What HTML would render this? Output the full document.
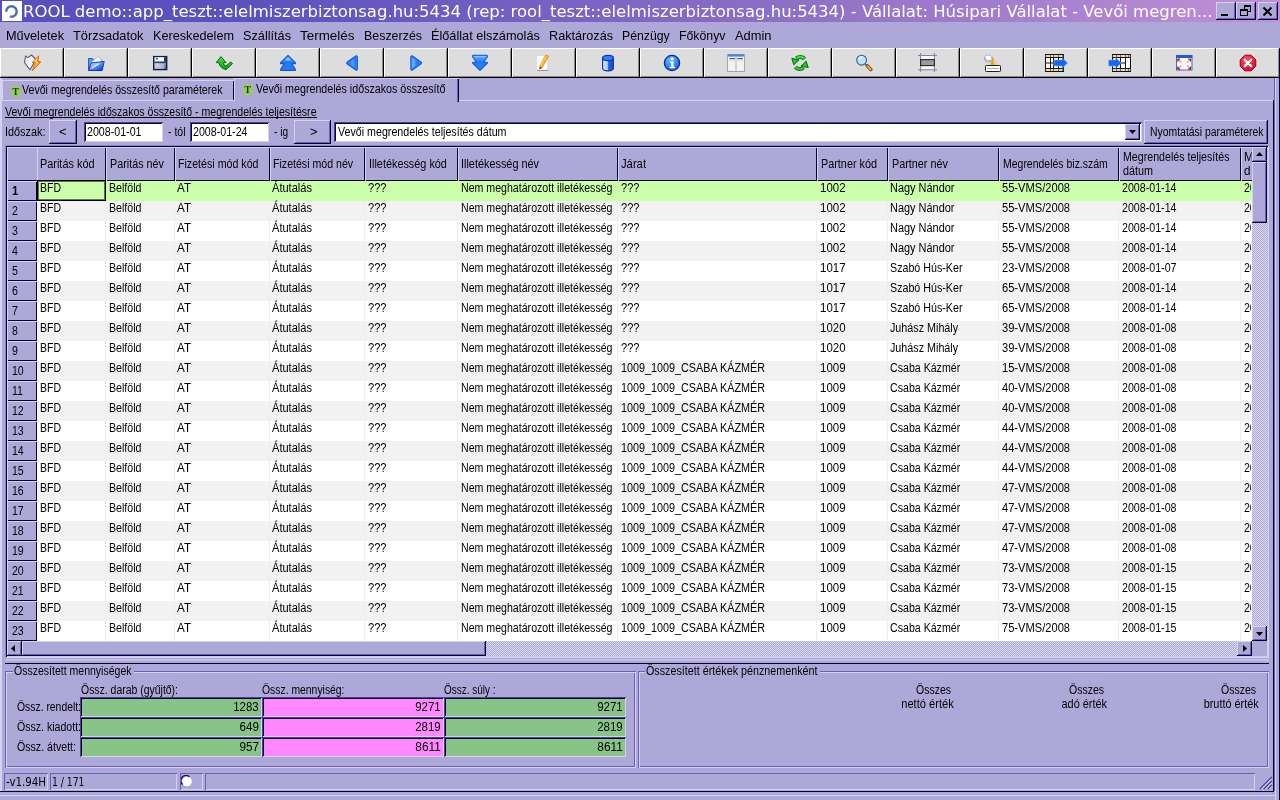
<!DOCTYPE html>
<html lang="hu"><head><meta charset="utf-8"><title>ROOL demo</title><style>
html,body{margin:0;padding:0}
body{width:1280px;height:800px;overflow:hidden;background:#AEA8D9;position:relative;font-family:"Liberation Sans",sans-serif;color:#000}
div,span,svg{position:absolute;box-sizing:border-box}
.t{white-space:nowrap;display:block}
.ov{left:0;top:0;width:1280px;height:800px;will-change:transform}
.tt{font-family:"DejaVu Sans","Liberation Sans",sans-serif}
</style></head>
<body>
<div style="left:0px;top:0px;width:1280px;height:22px;background:linear-gradient(90deg,#584EBE 0%,#5C52BE 20%,#8B6EC6 60%,#C190D6 100%);"></div>
<svg style="left:2px;top:1px" width="20" height="20" viewBox="0 0 20 20"><rect width="20" height="20" fill="#fff"/><path d="M4.3 10.7 A5.2 5.2 0 1 1 7.9 15.4" fill="none" stroke="#4E72A8" stroke-width="2.4"/></svg>
<div style="left:1216px;top:2px;width:20px;height:18px;background:#AEA8D9;box-shadow:inset -1px -1px 0 #07042E,inset 1px 1px 0 #D5D1F2,inset -2px -2px 0 #6A5FBA;"><div style="left:5px;top:12px;width:7px;height:2px;background:#000"></div></div>
<div style="left:1236px;top:2px;width:20px;height:18px;background:#AEA8D9;box-shadow:inset -1px -1px 0 #07042E,inset 1px 1px 0 #D5D1F2,inset -2px -2px 0 #6A5FBA;"><svg style="left:3px;top:2px" width="14" height="14" viewBox="0 0 14 14"><rect x="5.5" y="1.5" width="6" height="6" fill="#AEA8D9" stroke="#000"/><path d="M5 2h7" stroke="#000" stroke-width="2"/><rect x="1.5" y="5.5" width="7" height="6" fill="#AEA8D9" stroke="#000"/><path d="M1 6h8" stroke="#000" stroke-width="2"/></svg></div>
<div style="left:1258px;top:2px;width:20px;height:18px;background:#AEA8D9;box-shadow:inset -1px -1px 0 #07042E,inset 1px 1px 0 #D5D1F2,inset -2px -2px 0 #6A5FBA;"><svg style="left:4px;top:4px" width="11" height="11" viewBox="0 0 11 11"><path d="M1.5 1.5l8 8M9.5 1.5l-8 8" stroke="#000" stroke-width="2"/></svg></div>
<svg width="0" height="0" style="left:0;top:0"><defs><linearGradient id="gb" x1="0" y1="0" x2="0" y2="1"><stop offset="0" stop-color="#6CB4FF"/><stop offset=".45" stop-color="#1E7CF4"/><stop offset="1" stop-color="#2A80F0"/></linearGradient><linearGradient id="gbh" x1="0" y1="0" x2="1" y2="0"><stop offset="0" stop-color="#2478F4"/><stop offset=".6" stop-color="#4CA0FC"/><stop offset="1" stop-color="#1A68EC"/></linearGradient><linearGradient id="gbh2" x1="0" y1="0" x2="1" y2="0"><stop offset="0" stop-color="#8CCCFF"/><stop offset=".5" stop-color="#2C84F8"/><stop offset="1" stop-color="#1A6CF0"/></linearGradient><linearGradient id="gg" x1="0" y1="0" x2="0" y2="1"><stop offset="0" stop-color="#48E048"/><stop offset="1" stop-color="#0C9C14"/></linearGradient><linearGradient id="go" x1="0" y1="0" x2="1" y2="1"><stop offset="0" stop-color="#FFD040"/><stop offset="1" stop-color="#E86000"/></linearGradient><linearGradient id="gf" x1="0" y1="0" x2="1" y2="1"><stop offset="0" stop-color="#F4F6FE"/><stop offset=".5" stop-color="#B4BAD8"/><stop offset="1" stop-color="#4C548C"/></linearGradient><linearGradient id="gfo" x1="0" y1="0" x2="1" y2="1"><stop offset="0" stop-color="#F0F8FF"/><stop offset=".45" stop-color="#6CA4F4"/><stop offset=".8" stop-color="#1C54D8"/><stop offset="1" stop-color="#0C38B8"/></linearGradient><linearGradient id="gc" x1="0" y1="0" x2="1" y2="0"><stop offset="0" stop-color="#E0F2FF"/><stop offset=".45" stop-color="#9CCCFC"/><stop offset=".55" stop-color="#2468E0"/><stop offset="1" stop-color="#1448C8"/></linearGradient><radialGradient id="gi" cx=".4" cy=".3" r=".8"><stop offset="0" stop-color="#6CC0FF"/><stop offset="1" stop-color="#0C58E0"/></radialGradient><radialGradient id="gr" cx=".4" cy=".3" r=".8"><stop offset="0" stop-color="#FF5060"/><stop offset="1" stop-color="#D80018"/></radialGradient></defs></svg>
<div style="left:0px;top:48px;width:64px;height:30px;background:#DDDDDD;box-shadow:inset -1px -1px 0 #000,inset 1px 1px 0 #fff,inset -2px -2px 0 #8C8C8C;"><svg style="left:24px;top:6px;overflow:visible" width="16" height="18" viewBox="0 0 16 18"><path d="M0.5 8.5L1.5 2L3.8 3.6L7.5 1L12 5.5L6 15.8Z" fill="#F2F2FC" stroke="#585878" stroke-width="1.1" stroke-linejoin="round"/><path d="M14.8 1.8L8.2 8.4L11.2 8.9L8.2 16.9L16.8 7.9L13.6 7.3Z" fill="url(#go)" stroke="#E06800" stroke-width=".9" stroke-linejoin="round"/><path d="M13.6 3.6L9.8 7.8L12.4 8.2L10.4 13.2L14.8 8.4L12.6 8Z" fill="#FFD83C"/></svg></div>
<div style="left:64px;top:48px;width:64px;height:30px;background:#DDDDDD;box-shadow:inset -1px -1px 0 #000,inset 1px 1px 0 #fff,inset -2px -2px 0 #8C8C8C;"><svg style="left:24px;top:6px;overflow:visible" width="16" height="18" viewBox="0 0 16 18"><path d="M0.5 4.5h4l1.2 1.6h8v10.4h-13.2z" fill="#5C9CF4" stroke="#2448C8" stroke-width=".9"/><path d="M4 7.5L10 2.5L13.6 6v5H4z" fill="#F8FAFF" stroke="#90A0D0" stroke-width=".6"/><path d="M3.2 9L16.2 7.4L14.2 16.5H0.6z" fill="url(#gfo)" stroke="#1430B0" stroke-width=".9" stroke-linejoin="round"/><path d="M3.4 13.4L9.4 9.6L12.4 9.4L4.4 14.6Z" fill="#fff" opacity=".75"/></svg></div>
<div style="left:128px;top:48px;width:64px;height:30px;background:#DDDDDD;box-shadow:inset -1px -1px 0 #000,inset 1px 1px 0 #fff,inset -2px -2px 0 #8C8C8C;"><svg style="left:24px;top:6px;overflow:visible" width="16" height="18" viewBox="0 0 16 18"><rect x="1.7" y="2.6" width="13" height="13" fill="url(#gf)" stroke="#181C44" stroke-width="1.4"/><rect x="3.4" y="3.3" width="8.6" height="4" fill="#F6F8FF"/><rect x="4.2" y="3.8" width="1.5" height="1.7" fill="#303860"/><rect x="12" y="3.3" width="2.2" height="4.4" fill="#2A3064"/><rect x="2.4" y="7.6" width="11.8" height="1.5" fill="#343C6C"/><rect x="3.6" y="10.2" width="8.4" height="4.6" fill="#D4D8EC" opacity=".55"/></svg></div>
<div style="left:192px;top:48px;width:64px;height:30px;background:#DDDDDD;box-shadow:inset -1px -1px 0 #000,inset 1px 1px 0 #fff,inset -2px -2px 0 #8C8C8C;"><svg style="left:24px;top:6px;overflow:visible" width="16" height="18" viewBox="0 0 16 18"><path d="M5 2.6L0.2 8.6L3 8.6C3.4 12 6 15 10.2 15.6L16.6 9.6L14.6 8L10 12C8.2 11.4 7.6 10 7.6 8.6L10 8.6Z" fill="url(#gg)" stroke="#066C0A" stroke-width="1" stroke-linejoin="round"/></svg></div>
<div style="left:256px;top:48px;width:64px;height:30px;background:#DDDDDD;box-shadow:inset -1px -1px 0 #000,inset 1px 1px 0 #fff,inset -2px -2px 0 #8C8C8C;"><svg style="left:24px;top:6px;overflow:visible" width="16" height="18" viewBox="0 0 16 18"><path d="M8 1.4L15.4 8.6Q15.8 9.6 14.8 9.6H11.6L15.4 15.2Q15.8 16.4 14.6 16.4H1.4Q0.2 16.4 0.6 15.2L4.4 9.6H1.2Q0.2 9.6 0.6 8.6Z" fill="url(#gb)" stroke="#1458D8" stroke-width="1.1" stroke-linejoin="round"/><path d="M8 3L4.6 6.4h6.8Z" fill="#8CCCFF" opacity=".8"/></svg></div>
<div style="left:320px;top:48px;width:64px;height:30px;background:#DDDDDD;box-shadow:inset -1px -1px 0 #000,inset 1px 1px 0 #fff,inset -2px -2px 0 #8C8C8C;"><svg style="left:24px;top:6px;overflow:visible" width="16" height="18" viewBox="0 0 16 18"><path d="M3.6 9L12.4 2.8V15.2Z" fill="#1450D4" stroke="#1450D4" stroke-width="3" stroke-linejoin="round"/><path d="M3.6 9L12.4 2.8V15.2Z" fill="url(#gbh)" stroke="#2C80F6" stroke-width="1.2" stroke-linejoin="round"/></svg></div>
<div style="left:384px;top:48px;width:64px;height:30px;background:#DDDDDD;box-shadow:inset -1px -1px 0 #000,inset 1px 1px 0 #fff,inset -2px -2px 0 #8C8C8C;"><svg style="left:24px;top:6px;overflow:visible" width="16" height="18" viewBox="0 0 16 18"><path d="M12.6 9L3.8 2.8V15.2Z" fill="#1450D4" stroke="#1450D4" stroke-width="3" stroke-linejoin="round"/><path d="M12.6 9L3.8 2.8V15.2Z" fill="url(#gbh2)" stroke="#2C80F6" stroke-width="1.2" stroke-linejoin="round"/></svg></div>
<div style="left:448px;top:48px;width:64px;height:30px;background:#DDDDDD;box-shadow:inset -1px -1px 0 #000,inset 1px 1px 0 #fff,inset -2px -2px 0 #8C8C8C;"><svg style="left:24px;top:6px;overflow:visible" width="16" height="18" viewBox="0 0 16 18"><path d="M8 16.4L15.4 9.2Q15.8 8.2 14.8 8.2H11.6L15.4 2.6Q15.8 1.4 14.6 1.4H1.4Q0.2 1.4 0.6 2.6L4.4 8.2H1.2Q0.2 8.2 0.6 9.2Z" fill="url(#gb)" stroke="#1458D8" stroke-width="1.1" stroke-linejoin="round"/><path d="M2.4 2.4h11.2" stroke="#8CCCFF" stroke-width="1.2" opacity=".8"/></svg></div>
<div style="left:512px;top:48px;width:64px;height:30px;background:#DDDDDD;box-shadow:inset -1px -1px 0 #000,inset 1px 1px 0 #fff,inset -2px -2px 0 #8C8C8C;"><svg style="left:24px;top:6px;overflow:visible" width="16" height="18" viewBox="0 0 16 18"><rect x="1" y="2" width="11" height="14.3" fill="#FBFBFF"/><path d="M1 16.4h11.2" stroke="#8C8CA4" stroke-width="1"/><path d="M12 3v13" stroke="#C8C8DC" stroke-width=".8"/><path d="M9.8 0.8L12.8 2.2L6.4 13.6L3.6 15.2L3.8 12Z" fill="#F8A820" stroke="#D88000" stroke-width=".5"/><path d="M3.8 12.4L3.6 15.2L6 13.8Z" fill="#584020"/><path d="M10.2 2.4L4.6 12.4" stroke="#FFD870" stroke-width="1"/></svg></div>
<div style="left:576px;top:48px;width:64px;height:30px;background:#DDDDDD;box-shadow:inset -1px -1px 0 #000,inset 1px 1px 0 #fff,inset -2px -2px 0 #8C8C8C;"><svg style="left:24px;top:6px;overflow:visible" width="16" height="18" viewBox="0 0 16 18"><path d="M2.6 4v10c0 1.7 2.4 2.8 5.4 2.8s5.4-1.1 5.4-2.8V4z" fill="url(#gc)" stroke="#1434B0" stroke-width="1.2"/><ellipse cx="8" cy="4" rx="5.4" ry="2.6" fill="#2C84F8" stroke="#1434B0" stroke-width="1.2"/></svg></div>
<div style="left:640px;top:48px;width:64px;height:30px;background:#DDDDDD;box-shadow:inset -1px -1px 0 #000,inset 1px 1px 0 #fff,inset -2px -2px 0 #8C8C8C;"><svg style="left:24px;top:6px;overflow:visible" width="16" height="18" viewBox="0 0 16 18"><circle cx="8" cy="9" r="7.6" fill="url(#gi)" stroke="#0828A0" stroke-width="1.3"/><circle cx="8.3" cy="4.8" r="1.5" fill="#fff"/><path d="M6 7.4h3.6v5.4h1.4v1.4H5.6v-1.4h1.6v-4H6z" fill="#fff"/></svg></div>
<div style="left:704px;top:48px;width:64px;height:30px;background:#DDDDDD;box-shadow:inset -1px -1px 0 #000,inset 1px 1px 0 #fff,inset -2px -2px 0 #8C8C8C;"><svg style="left:24px;top:6px;overflow:visible" width="16" height="18" viewBox="0 0 16 18"><rect x="-0.5" y="0.5" width="17" height="17" fill="#F4F3EC" stroke="#98A2CC" stroke-width="1"/><rect x="0" y="0.2" width="16" height="2.4" fill="#4C80E4"/><path d="M8 3v14" stroke="#A8B0D0" stroke-width="1"/><path d="M1.4 4.6h5.6M9.4 4.6h5.6" stroke="#506870" stroke-width="1.2"/><path d="M0 7h16" stroke="#E8D8E8" stroke-width=".8"/></svg></div>
<div style="left:768px;top:48px;width:64px;height:30px;background:#DDDDDD;box-shadow:inset -1px -1px 0 #000,inset 1px 1px 0 #fff,inset -2px -2px 0 #8C8C8C;"><svg style="left:24px;top:6px;overflow:visible" width="16" height="18" viewBox="0 0 16 18"><g fill="none" stroke="#066C0A" stroke-width="4"><path d="M12.6 5A5.8 5.8 0 0 0 4.4 4.4"/><path d="M3.4 13A5.8 5.8 0 0 0 11.6 13.6"/></g><path d="M-0.2 4.4L7 5.8L1.8 10.8Z" fill="#066C0A" stroke="#066C0A" stroke-width="1" stroke-linejoin="round"/><path d="M16.2 13.6L9 12.2L14.2 7.2Z" fill="#066C0A" stroke="#066C0A" stroke-width="1" stroke-linejoin="round"/><g fill="none" stroke="#28C830" stroke-width="2.4"><path d="M12.6 5A5.8 5.8 0 0 0 4.4 4.4"/><path d="M3.4 13A5.8 5.8 0 0 0 11.6 13.6"/></g><path d="M0.5 4.9L6.2 6L2 10Z" fill="#22C02A"/><path d="M15.5 13.1L9.8 12L14 8Z" fill="#22C02A"/><path d="M11.8 4A5.4 5.4 0 0 0 5.4 3.4" fill="none" stroke="#78F478" stroke-width="1" opacity=".8"/></svg></div>
<div style="left:832px;top:48px;width:64px;height:30px;background:#DDDDDD;box-shadow:inset -1px -1px 0 #000,inset 1px 1px 0 #fff,inset -2px -2px 0 #8C8C8C;"><svg style="left:24px;top:6px;overflow:visible" width="16" height="18" viewBox="0 0 16 18"><path d="M9 9.8L11.4 12.2" stroke="#50586C" stroke-width="1.6"/><path d="M11.4 12L14.8 15.4" stroke="#7A4410" stroke-width="3.6" stroke-linecap="round"/><path d="M11.6 12.2L14.6 15.2" stroke="#F0A43C" stroke-width="2" stroke-linecap="round"/><circle cx="5.6" cy="6.2" r="4.9" fill="#B8E6FC" stroke="#38607C" stroke-width="1.1"/><path d="M2.6 5.4A3.2 3.2 0 0 1 6 3" stroke="#fff" stroke-width="1" fill="none"/></svg></div>
<div style="left:896px;top:48px;width:64px;height:30px;background:#DDDDDD;box-shadow:inset -1px -1px 0 #000,inset 1px 1px 0 #fff,inset -2px -2px 0 #8C8C8C;"><svg style="left:24px;top:6px;overflow:visible" width="16" height="18" viewBox="0 0 16 18"><rect x="1" y="2" width="13" height="13.5" fill="#F8F8FF"/><path d="M-2 1.5h19M-2 15.8h19M0.6 -1v19M14.4 -1v19" stroke="#8080A8" stroke-width="1"/><rect x="0.6" y="5.6" width="13.8" height="6" fill="#989C98" stroke="#282828" stroke-width="1.1"/></svg></div>
<div style="left:960px;top:48px;width:64px;height:30px;background:#DDDDDD;box-shadow:inset -1px -1px 0 #000,inset 1px 1px 0 #fff,inset -2px -2px 0 #8C8C8C;"><svg style="left:24px;top:6px;overflow:visible" width="16" height="18" viewBox="0 0 16 18"><path d="M8 2.2L6.2 11.4H14.8Z" fill="#F0A030"/><path d="M9.6 4.4L14.4 11H10.4Z" fill="#D8E4F0" opacity=".75"/><circle cx="4.2" cy="4.6" r="3.7" fill="#FDFDFD" stroke="#A0A4B4" stroke-width=".8"/><path d="M0.8 3.6C1.4 6.6 4 7.8 6.6 6.4" stroke="#70788C" stroke-width="1" fill="none"/><rect x="1.5" y="11.5" width="15" height="6" rx=".8" fill="#FDFDFD" stroke="#202020" stroke-width="1"/><path d="M3.5 14.5h11" stroke="#505050" stroke-width="1" stroke-dasharray="1 1"/></svg></div>
<div style="left:1024px;top:48px;width:64px;height:30px;background:#DDDDDD;box-shadow:inset -1px -1px 0 #000,inset 1px 1px 0 #fff,inset -2px -2px 0 #8C8C8C;"><svg style="left:24px;top:6px;overflow:visible" width="16" height="18" viewBox="0 0 16 18"><rect x="-2.5" y="0.5" width="18" height="17" fill="#FBF8EC" stroke="#101010" stroke-width="1"/><path d="M-2.5 3.5h18M-2.5 9h18M-2.5 14.5h18M2.5 0.5v17M5.5 0.5v17M10.5 0.5v17M14.5 0.5v17" stroke="#181810" stroke-width="1"/><path d="M-2.5 2h18M-2.5 16h18" stroke="#C8B890" stroke-width="1.6" opacity=".7"/><path d="M6 6h8V3.6L19.6 9L14 14.4V12H6Z" fill="#1466F4" stroke="#88B8FF" stroke-width=".6"/></svg></div>
<div style="left:1088px;top:48px;width:64px;height:30px;background:#DDDDDD;box-shadow:inset -1px -1px 0 #000,inset 1px 1px 0 #fff,inset -2px -2px 0 #8C8C8C;"><svg style="left:24px;top:6px;overflow:visible" width="16" height="18" viewBox="0 0 16 18"><rect x="0.5" y="0.5" width="18" height="17" fill="#FBF8EC" stroke="#101010" stroke-width="1"/><path d="M0.5 3.5h18M0.5 9h18M0.5 14.5h18M4.5 0.5v17M8.5 0.5v17M13.5 0.5v17M16.5 0.5v17" stroke="#181810" stroke-width="1"/><path d="M0.5 2h18M0.5 16h18" stroke="#C8B890" stroke-width="1.6" opacity=".7"/><rect x="14" y="4" width="4" height="10" fill="#fff"/><path d="M-3.4 6h7V3.6L9.4 9L3.6 14.4V12h-7Z" fill="#1466F4" stroke="#88B8FF" stroke-width=".6"/></svg></div>
<div style="left:1152px;top:48px;width:64px;height:30px;background:#DDDDDD;box-shadow:inset -1px -1px 0 #000,inset 1px 1px 0 #fff,inset -2px -2px 0 #8C8C8C;"><svg style="left:24px;top:6px;overflow:visible" width="16" height="18" viewBox="0 0 16 18"><rect x="0.5" y="1.5" width="15.5" height="14.5" fill="#FFF8F8" stroke="#4468C8" stroke-width="1"/><rect x="0.2" y="1" width="16" height="3" fill="#2458DC"/><path d="M2.4 6L5.4 8.6M14 6L11 8.6M2.4 14.2L5.4 11.6M14 14.2L11 11.6" stroke="#F09090" stroke-width="1.3"/><path d="M1.6 5.2h2.6M1.8 5v2.6M14.8 5.2h-2.6M14.6 5v2.6M1.6 15h2.6M1.8 15.2v-2.6M14.8 15h-2.6M14.6 15.2v-2.6" stroke="#A02028" stroke-width="1.3"/></svg></div>
<div style="left:1216px;top:48px;width:64px;height:30px;background:#DDDDDD;box-shadow:inset -1px -1px 0 #000,inset 1px 1px 0 #fff,inset -2px -2px 0 #8C8C8C;"><svg style="left:24px;top:6px;overflow:visible" width="16" height="18" viewBox="0 0 16 18"><path d="M4.8 1.2h6.4L15.8 5.8v6.4L11.2 16.8H4.8L0.2 12.2V5.8Z" fill="url(#gr)" stroke="#A80010" stroke-width="1"/><path d="M4.8 5.8l6.4 6.4M11.2 5.8l-6.4 6.4" stroke="#fff" stroke-width="2.4" stroke-linecap="round"/></svg></div>
<div style="left:0px;top:78px;width:2px;height:713px;background:#D5D1F2;"></div>
<div style="left:1274px;top:78px;width:1px;height:713px;background:#6A5FBA;"></div>
<div style="left:1275px;top:78px;width:1px;height:722px;background:#D5D1F2;"></div>
<div style="left:1279px;top:48px;width:1px;height:752px;background:#07042E;"></div>
<div style="left:1273px;top:100px;width:1px;height:692px;background:#07042E;"></div>
<div style="left:0px;top:791px;width:1274px;height:1px;background:#07042E;"></div>
<div style="left:0px;top:795px;width:1276px;height:1px;background:#D5D1F2;"></div>
<div style="left:2px;top:100px;width:1271px;height:1px;background:#D5D1F2;"></div>
<div style="left:2px;top:80px;width:232px;height:20px;background:#AEA8D9;box-shadow:inset 1px 1px 0 #D5D1F2;"></div>
<div style="left:233px;top:81px;width:1px;height:19px;background:#07042E;"></div>
<div style="left:234px;top:78px;width:225px;height:24px;background:#AEA8D9;box-shadow:inset 1px 1px 0 #D5D1F2,inset -1px 0 0 #07042E,inset -2px 0 0 #6A5FBA;"></div>
<div style="left:11px;top:86px;width:10px;height:11px;background:#9ACA62;border-radius:2px"></div>
<div style="left:243px;top:84px;width:10px;height:11px;background:#9ACA62;border-radius:2px"></div>
<div style="left:5px;top:117px;width:312px;height:1px;background:#000;"></div>
<div style="left:49px;top:120px;width:28px;height:24px;background:#AEA8D9;box-shadow:inset -1px -1px 0 #07042E,inset 1px 1px 0 #D5D1F2,inset -2px -2px 0 #6A5FBA;"></div>
<div style="left:84px;top:122px;width:79px;height:20px;background:#fff;box-shadow:inset 1px 1px 0 #4A4098,inset -1px -1px 0 #D5D1F2,inset 2px 2px 0 #07042E;"></div>
<div style="left:190px;top:122px;width:79px;height:20px;background:#fff;box-shadow:inset 1px 1px 0 #4A4098,inset -1px -1px 0 #D5D1F2,inset 2px 2px 0 #07042E;"></div>
<div style="left:294px;top:120px;width:37px;height:24px;background:#AEA8D9;box-shadow:inset -1px -1px 0 #07042E,inset 1px 1px 0 #D5D1F2,inset -2px -2px 0 #6A5FBA;"></div>
<div style="left:334px;top:122px;width:808px;height:20px;background:#fff;box-shadow:inset 1px 1px 0 #4A4098,inset -1px -1px 0 #D5D1F2,inset 2px 2px 0 #07042E;"></div>
<div style="left:1125px;top:124px;width:15px;height:16px;background:#AEA8D9;box-shadow:inset -1px -1px 0 #07042E,inset 1px 1px 0 #D5D1F2,inset -2px -2px 0 #6A5FBA;"><svg style="left:4px;top:6px" width="7" height="4" viewBox="0 0 7 4"><path d="M0 0h7L3.5 4z" fill="#000"/></svg></div>
<div style="left:1144px;top:120px;width:124px;height:24px;background:#AEA8D9;box-shadow:inset -1px -1px 0 #07042E,inset 1px 1px 0 #D5D1F2,inset -2px -2px 0 #6A5FBA;"></div>
<div style="left:5px;top:145px;width:1264px;height:513px;background:#fff;box-shadow:inset 1px 1px 0 #8A82CC,inset -1px -1px 0 #D5D1F2,inset 2px 2px 0 #07042E,inset -2px -2px 0 #D0CCEA;"></div>
<div style="left:7px;top:147px;width:1245px;height:34px;background:#AEA8D9;"></div>
<div style="left:7px;top:147px;width:30px;height:34px;background:#AEA8D9;box-shadow:inset 1px 1px 0 #D5D1F2,inset 0 -1px 0 #07042E;"></div>
<div style="left:37px;top:147px;width:69px;height:34px;background:#AEA8D9;box-shadow:inset 1px 1px 0 #D5D1F2,inset -1px -1px 0 #07042E;"></div>
<div style="left:106px;top:147px;width:69px;height:34px;background:#AEA8D9;box-shadow:inset 1px 1px 0 #D5D1F2,inset -1px -1px 0 #07042E;"></div>
<div style="left:175px;top:147px;width:95px;height:34px;background:#AEA8D9;box-shadow:inset 1px 1px 0 #D5D1F2,inset -1px -1px 0 #07042E;"></div>
<div style="left:270px;top:147px;width:95px;height:34px;background:#AEA8D9;box-shadow:inset 1px 1px 0 #D5D1F2,inset -1px -1px 0 #07042E;"></div>
<div style="left:365px;top:147px;width:93px;height:34px;background:#AEA8D9;box-shadow:inset 1px 1px 0 #D5D1F2,inset -1px -1px 0 #07042E;"></div>
<div style="left:458px;top:147px;width:160px;height:34px;background:#AEA8D9;box-shadow:inset 1px 1px 0 #D5D1F2,inset -1px -1px 0 #07042E;"></div>
<div style="left:618px;top:147px;width:199px;height:34px;background:#AEA8D9;box-shadow:inset 1px 1px 0 #D5D1F2,inset -1px -1px 0 #07042E;"></div>
<div style="left:817px;top:147px;width:71px;height:34px;background:#AEA8D9;box-shadow:inset 1px 1px 0 #D5D1F2,inset -1px -1px 0 #07042E;"></div>
<div style="left:888px;top:147px;width:111px;height:34px;background:#AEA8D9;box-shadow:inset 1px 1px 0 #D5D1F2,inset -1px -1px 0 #07042E;"></div>
<div style="left:999px;top:147px;width:120px;height:34px;background:#AEA8D9;box-shadow:inset 1px 1px 0 #D5D1F2,inset -1px -1px 0 #07042E;"></div>
<div style="left:1119px;top:147px;width:122px;height:34px;background:#AEA8D9;box-shadow:inset 1px 1px 0 #D5D1F2,inset -1px -1px 0 #07042E;"></div>
<div style="left:1241px;top:147px;width:19px;height:34px;background:#AEA8D9;box-shadow:inset 1px 1px 0 #D5D1F2,inset -1px -1px 0 #07042E;"></div>
<div style="left:37px;top:181px;width:1215px;height:20px;background:#CCFFAA;"></div>
<div style="left:7px;top:181px;width:30px;height:20px;background:#AEA8D9;box-shadow:inset 1px 1px 0 #D5D1F2,inset -1px -1px 0 #07042E;"></div>
<div style="left:37px;top:201px;width:1215px;height:20px;background:#F2F2F2;"></div>
<div style="left:7px;top:201px;width:30px;height:20px;background:#AEA8D9;box-shadow:inset 1px 1px 0 #D5D1F2,inset -1px -1px 0 #07042E;"></div>
<div style="left:37px;top:221px;width:1215px;height:20px;background:#FFFFFF;"></div>
<div style="left:7px;top:221px;width:30px;height:20px;background:#AEA8D9;box-shadow:inset 1px 1px 0 #D5D1F2,inset -1px -1px 0 #07042E;"></div>
<div style="left:37px;top:241px;width:1215px;height:20px;background:#F2F2F2;"></div>
<div style="left:7px;top:241px;width:30px;height:20px;background:#AEA8D9;box-shadow:inset 1px 1px 0 #D5D1F2,inset -1px -1px 0 #07042E;"></div>
<div style="left:37px;top:261px;width:1215px;height:20px;background:#FFFFFF;"></div>
<div style="left:7px;top:261px;width:30px;height:20px;background:#AEA8D9;box-shadow:inset 1px 1px 0 #D5D1F2,inset -1px -1px 0 #07042E;"></div>
<div style="left:37px;top:281px;width:1215px;height:20px;background:#F2F2F2;"></div>
<div style="left:7px;top:281px;width:30px;height:20px;background:#AEA8D9;box-shadow:inset 1px 1px 0 #D5D1F2,inset -1px -1px 0 #07042E;"></div>
<div style="left:37px;top:301px;width:1215px;height:20px;background:#FFFFFF;"></div>
<div style="left:7px;top:301px;width:30px;height:20px;background:#AEA8D9;box-shadow:inset 1px 1px 0 #D5D1F2,inset -1px -1px 0 #07042E;"></div>
<div style="left:37px;top:321px;width:1215px;height:20px;background:#F2F2F2;"></div>
<div style="left:7px;top:321px;width:30px;height:20px;background:#AEA8D9;box-shadow:inset 1px 1px 0 #D5D1F2,inset -1px -1px 0 #07042E;"></div>
<div style="left:37px;top:341px;width:1215px;height:20px;background:#FFFFFF;"></div>
<div style="left:7px;top:341px;width:30px;height:20px;background:#AEA8D9;box-shadow:inset 1px 1px 0 #D5D1F2,inset -1px -1px 0 #07042E;"></div>
<div style="left:37px;top:361px;width:1215px;height:20px;background:#F2F2F2;"></div>
<div style="left:7px;top:361px;width:30px;height:20px;background:#AEA8D9;box-shadow:inset 1px 1px 0 #D5D1F2,inset -1px -1px 0 #07042E;"></div>
<div style="left:37px;top:381px;width:1215px;height:20px;background:#FFFFFF;"></div>
<div style="left:7px;top:381px;width:30px;height:20px;background:#AEA8D9;box-shadow:inset 1px 1px 0 #D5D1F2,inset -1px -1px 0 #07042E;"></div>
<div style="left:37px;top:401px;width:1215px;height:20px;background:#F2F2F2;"></div>
<div style="left:7px;top:401px;width:30px;height:20px;background:#AEA8D9;box-shadow:inset 1px 1px 0 #D5D1F2,inset -1px -1px 0 #07042E;"></div>
<div style="left:37px;top:421px;width:1215px;height:20px;background:#FFFFFF;"></div>
<div style="left:7px;top:421px;width:30px;height:20px;background:#AEA8D9;box-shadow:inset 1px 1px 0 #D5D1F2,inset -1px -1px 0 #07042E;"></div>
<div style="left:37px;top:441px;width:1215px;height:20px;background:#F2F2F2;"></div>
<div style="left:7px;top:441px;width:30px;height:20px;background:#AEA8D9;box-shadow:inset 1px 1px 0 #D5D1F2,inset -1px -1px 0 #07042E;"></div>
<div style="left:37px;top:461px;width:1215px;height:20px;background:#FFFFFF;"></div>
<div style="left:7px;top:461px;width:30px;height:20px;background:#AEA8D9;box-shadow:inset 1px 1px 0 #D5D1F2,inset -1px -1px 0 #07042E;"></div>
<div style="left:37px;top:481px;width:1215px;height:20px;background:#F2F2F2;"></div>
<div style="left:7px;top:481px;width:30px;height:20px;background:#AEA8D9;box-shadow:inset 1px 1px 0 #D5D1F2,inset -1px -1px 0 #07042E;"></div>
<div style="left:37px;top:501px;width:1215px;height:20px;background:#FFFFFF;"></div>
<div style="left:7px;top:501px;width:30px;height:20px;background:#AEA8D9;box-shadow:inset 1px 1px 0 #D5D1F2,inset -1px -1px 0 #07042E;"></div>
<div style="left:37px;top:521px;width:1215px;height:20px;background:#F2F2F2;"></div>
<div style="left:7px;top:521px;width:30px;height:20px;background:#AEA8D9;box-shadow:inset 1px 1px 0 #D5D1F2,inset -1px -1px 0 #07042E;"></div>
<div style="left:37px;top:541px;width:1215px;height:20px;background:#FFFFFF;"></div>
<div style="left:7px;top:541px;width:30px;height:20px;background:#AEA8D9;box-shadow:inset 1px 1px 0 #D5D1F2,inset -1px -1px 0 #07042E;"></div>
<div style="left:37px;top:561px;width:1215px;height:20px;background:#F2F2F2;"></div>
<div style="left:7px;top:561px;width:30px;height:20px;background:#AEA8D9;box-shadow:inset 1px 1px 0 #D5D1F2,inset -1px -1px 0 #07042E;"></div>
<div style="left:37px;top:581px;width:1215px;height:20px;background:#FFFFFF;"></div>
<div style="left:7px;top:581px;width:30px;height:20px;background:#AEA8D9;box-shadow:inset 1px 1px 0 #D5D1F2,inset -1px -1px 0 #07042E;"></div>
<div style="left:37px;top:601px;width:1215px;height:20px;background:#F2F2F2;"></div>
<div style="left:7px;top:601px;width:30px;height:20px;background:#AEA8D9;box-shadow:inset 1px 1px 0 #D5D1F2,inset -1px -1px 0 #07042E;"></div>
<div style="left:37px;top:621px;width:1215px;height:20px;background:#FFFFFF;"></div>
<div style="left:7px;top:621px;width:30px;height:20px;background:#AEA8D9;box-shadow:inset 1px 1px 0 #D5D1F2,inset -1px -1px 0 #07042E;"></div>
<div style="left:105px;top:201px;width:1px;height:440px;background:#EEEEEE;"></div>
<div style="left:174px;top:201px;width:1px;height:440px;background:#EEEEEE;"></div>
<div style="left:269px;top:201px;width:1px;height:440px;background:#EEEEEE;"></div>
<div style="left:364px;top:201px;width:1px;height:440px;background:#EEEEEE;"></div>
<div style="left:457px;top:201px;width:1px;height:440px;background:#EEEEEE;"></div>
<div style="left:617px;top:201px;width:1px;height:440px;background:#EEEEEE;"></div>
<div style="left:816px;top:201px;width:1px;height:440px;background:#EEEEEE;"></div>
<div style="left:887px;top:201px;width:1px;height:440px;background:#EEEEEE;"></div>
<div style="left:998px;top:201px;width:1px;height:440px;background:#EEEEEE;"></div>
<div style="left:1118px;top:201px;width:1px;height:440px;background:#EEEEEE;"></div>
<div style="left:1240px;top:201px;width:1px;height:440px;background:#EEEEEE;"></div>
<div style="left:37px;top:180px;width:69px;height:21px;border:1px solid #000;box-shadow:inset 0 0 0 1px rgba(0,0,0,.55);box-sizing:border-box;"></div>
<div style="left:1252px;top:147px;width:16px;height:494px;background-color:#C5C1E6;background-image:conic-gradient(#AEA8D9 25%,#DCD9F3 0 50%,#AEA8D9 0 75%,#DCD9F3 0);background-size:2px 2px;"></div>
<div style="left:7px;top:641px;width:1245px;height:15px;background-color:#C5C1E6;background-image:conic-gradient(#AEA8D9 25%,#DCD9F3 0 50%,#AEA8D9 0 75%,#DCD9F3 0);background-size:2px 2px;"></div>
<div style="left:1252px;top:641px;width:15px;height:15px;background:#AEA8D9;"></div>
<div style="left:1252px;top:147px;width:15px;height:15px;background:#AEA8D9;box-shadow:inset -1px -1px 0 #07042E,inset 1px 1px 0 #D5D1F2,inset -2px -2px 0 #6A5FBA;"><svg style="left:4px;top:5px" width="7" height="4" viewBox="0 0 7 4"><path d="M0 4h7L3.5 0z" fill="#000"/></svg></div>
<div style="left:1252px;top:162px;width:15px;height:61px;background:#AEA8D9;box-shadow:inset -1px -1px 0 #07042E,inset 1px 1px 0 #D5D1F2,inset -2px -2px 0 #6A5FBA;"></div>
<div style="left:1252px;top:626px;width:15px;height:15px;background:#AEA8D9;box-shadow:inset -1px -1px 0 #07042E,inset 1px 1px 0 #D5D1F2,inset -2px -2px 0 #6A5FBA;"><svg style="left:4px;top:6px" width="7" height="4" viewBox="0 0 7 4"><path d="M0 0h7L3.5 4z" fill="#000"/></svg></div>
<div style="left:7px;top:641px;width:15px;height:15px;background:#AEA8D9;box-shadow:inset -1px -1px 0 #07042E,inset 1px 1px 0 #D5D1F2,inset -2px -2px 0 #6A5FBA;"><svg style="left:4px;top:4px" width="4" height="7" viewBox="0 0 4 7"><path d="M4 0v7L0 3.5z" fill="#000"/></svg></div>
<div style="left:22px;top:641px;width:464px;height:15px;background:#AEA8D9;box-shadow:inset -1px -1px 0 #07042E,inset 1px 1px 0 #D5D1F2,inset -2px -2px 0 #6A5FBA;"></div>
<div style="left:1237px;top:641px;width:15px;height:15px;background:#AEA8D9;box-shadow:inset -1px -1px 0 #07042E,inset 1px 1px 0 #D5D1F2,inset -2px -2px 0 #6A5FBA;"><svg style="left:6px;top:4px" width="4" height="7" viewBox="0 0 4 7"><path d="M0 0v7L4 3.5z" fill="#000"/></svg></div>
<div style="left:5px;top:659px;width:1264px;height:2px;background:#C4C0E5;"></div>
<div style="left:5px;top:663px;width:1264px;height:1px;background:#07042E;"></div>
<div style="left:5px;top:671px;width:631px;height:97px;box-shadow:inset 1px 1px 0 #6A5FBA,inset -1px -1px 0 #D5D1F2,inset 2px 2px 0 #D5D1F2,inset -2px -2px 0 #6A5FBA;"></div>
<div style="left:12.5px;top:667px;width:121px;height:10px;background:#AEA8D9;"></div>
<div style="left:638px;top:671px;width:631px;height:97px;box-shadow:inset 1px 1px 0 #6A5FBA,inset -1px -1px 0 #D5D1F2,inset 2px 2px 0 #D5D1F2,inset -2px -2px 0 #6A5FBA;"></div>
<div style="left:645px;top:667px;width:175px;height:10px;background:#AEA8D9;"></div>
<div style="left:80px;top:697px;width:182px;height:20px;background:#88C488;box-shadow:inset 1px 1px 0 #4A4098,inset -1px -1px 0 #D5D1F2,inset 2px 2px 0 #07042E;"></div>
<div style="left:262px;top:697px;width:182px;height:20px;background:#FF88FF;box-shadow:inset 1px 1px 0 #4A4098,inset -1px -1px 0 #D5D1F2,inset 2px 2px 0 #07042E;"></div>
<div style="left:444px;top:697px;width:182px;height:20px;background:#88C488;box-shadow:inset 1px 1px 0 #4A4098,inset -1px -1px 0 #D5D1F2,inset 2px 2px 0 #07042E;"></div>
<div style="left:80px;top:717px;width:182px;height:20px;background:#88C488;box-shadow:inset 1px 1px 0 #4A4098,inset -1px -1px 0 #D5D1F2,inset 2px 2px 0 #07042E;"></div>
<div style="left:262px;top:717px;width:182px;height:20px;background:#FF88FF;box-shadow:inset 1px 1px 0 #4A4098,inset -1px -1px 0 #D5D1F2,inset 2px 2px 0 #07042E;"></div>
<div style="left:444px;top:717px;width:182px;height:20px;background:#88C488;box-shadow:inset 1px 1px 0 #4A4098,inset -1px -1px 0 #D5D1F2,inset 2px 2px 0 #07042E;"></div>
<div style="left:80px;top:737px;width:182px;height:20px;background:#88C488;box-shadow:inset 1px 1px 0 #4A4098,inset -1px -1px 0 #D5D1F2,inset 2px 2px 0 #07042E;"></div>
<div style="left:262px;top:737px;width:182px;height:20px;background:#FF88FF;box-shadow:inset 1px 1px 0 #4A4098,inset -1px -1px 0 #D5D1F2,inset 2px 2px 0 #07042E;"></div>
<div style="left:444px;top:737px;width:182px;height:20px;background:#88C488;box-shadow:inset 1px 1px 0 #4A4098,inset -1px -1px 0 #D5D1F2,inset 2px 2px 0 #07042E;"></div>
<div style="left:4px;top:773px;width:44px;height:17px;box-shadow:inset 1px 1px 0 #6A5FBA,inset -1px -1px 0 #D5D1F2;"></div>
<div style="left:50px;top:773px;width:127px;height:17px;box-shadow:inset 1px 1px 0 #6A5FBA,inset -1px -1px 0 #D5D1F2;"></div>
<div style="left:180px;top:773px;width:23px;height:17px;box-shadow:inset 1px 1px 0 #6A5FBA,inset -1px -1px 0 #D5D1F2;"></div>
<div style="left:205px;top:773px;width:1050px;height:17px;box-shadow:inset 1px 1px 0 #6A5FBA,inset -1px -1px 0 #D5D1F2;"></div>
<svg style="left:181px;top:775px" width="12" height="13" viewBox="0 0 12 13"><circle cx="6" cy="6.5" r="4.8" fill="#fff"/><path d="M1.6 9.6 A5.2 5.2 0 0 1 8.4 1.7" fill="none" stroke="#1A1440" stroke-width="1.3"/></svg>
<svg style="left:1259px;top:776px" width="14" height="14" viewBox="0 0 14 14"><path d="M13 1L1 13M13 5L5 13M13 9L9 13" stroke="#463C9C" stroke-width="1.5"/><path d="M13 2.3L2.3 13M13 6.3L6.3 13M13 10.3L10.3 13" stroke="#D8D5EC" stroke-width="1"/></svg>
<div class="ov">
<span class="t tt" style="font-size:16px;transform:scaleX(1.0302);line-height:18px;top:2.71px;left:23.00px;transform-origin:0 0;color:#fff;">ROOL demo::app_teszt::elelmiszerbiztonsag.hu:5434 (rep: rool_teszt::elelmiszerbiztonsag.hu:5434) - Vállalat: Húsipari Vállalat - Vevői megren...</span>
<span class="t" style="font-size:13px;transform:scaleX(0.9789);line-height:15px;top:28.20px;left:5.50px;transform-origin:0 0;">Műveletek</span>
<span class="t" style="font-size:13px;transform:scaleX(0.9856);line-height:15px;top:28.20px;left:73.00px;transform-origin:0 0;">Törzsadatok</span>
<span class="t" style="font-size:13px;transform:scaleX(0.9748);line-height:15px;top:28.20px;left:152.50px;transform-origin:0 0;">Kereskedelem</span>
<span class="t" style="font-size:13px;transform:scaleX(0.9770);line-height:15px;top:28.20px;left:242.50px;transform-origin:0 0;">Szállítás</span>
<span class="t" style="font-size:13px;transform:scaleX(1.0335);line-height:15px;top:28.20px;left:300.00px;transform-origin:0 0;">Termelés</span>
<span class="t" style="font-size:13px;transform:scaleX(0.9557);line-height:15px;top:28.20px;left:363.50px;transform-origin:0 0;">Beszerzés</span>
<span class="t" style="font-size:13px;transform:scaleX(0.9778);line-height:15px;top:28.20px;left:430.70px;transform-origin:0 0;">Élőállat elszámolás</span>
<span class="t" style="font-size:13px;transform:scaleX(0.9734);line-height:15px;top:28.20px;left:548.50px;transform-origin:0 0;">Raktározás</span>
<span class="t" style="font-size:13px;transform:scaleX(0.9429);line-height:15px;top:28.20px;left:621.50px;transform-origin:0 0;">Pénzügy</span>
<span class="t" style="font-size:13px;transform:scaleX(0.9465);line-height:15px;top:28.20px;left:679.00px;transform-origin:0 0;">Főkönyv</span>
<span class="t" style="font-size:13px;transform:scaleX(0.9906);line-height:15px;top:28.20px;left:735.00px;transform-origin:0 0;">Admin</span>
<span class="t" style="left:12.6px;top:85.5px;font-family:'Liberation Serif',serif;font-weight:bold;font-size:9.5px;line-height:12px;color:#0A400A">T</span>
<span class="t" style="left:244.6px;top:83.5px;font-family:'Liberation Serif',serif;font-weight:bold;font-size:9.5px;line-height:12px;color:#0A400A">T</span>
<span class="t" style="font-size:12px;transform:scaleX(0.8841);line-height:14px;top:83.03px;left:22.00px;transform-origin:0 0;">Vevői megrendelés összesítő paraméterek</span>
<span class="t" style="font-size:12px;transform:scaleX(0.8906);line-height:14px;top:82.03px;left:256.00px;transform-origin:0 0;">Vevői megrendelés időszakos összesítő</span>
<span class="t" style="font-size:12px;transform:scaleX(0.8795);line-height:14px;top:105.03px;left:5.00px;transform-origin:0 0;">Vevői megrendelés időszakos összesítő - megrendelés teljesítésre</span>
<span class="t" style="font-size:12px;transform:scaleX(0.9063);line-height:14px;top:125.03px;left:4.50px;transform-origin:0 0;">Időszak:</span>
<span class="t" style="font-size:12px;transform:scaleX(1.0702);line-height:14px;top:125.03px;left:59.00px;transform-origin:0 0;">&lt;</span>
<span class="t" style="font-size:12px;transform:scaleX(0.8879);line-height:14px;top:125.03px;left:87.00px;transform-origin:0 0;">2008-01-01</span>
<span class="t" style="font-size:12px;transform:scaleX(0.8748);line-height:14px;top:125.03px;left:167.50px;transform-origin:0 0;">- tól</span>
<span class="t" style="font-size:12px;transform:scaleX(0.8879);line-height:14px;top:125.03px;left:193.00px;transform-origin:0 0;">2008-01-24</span>
<span class="t" style="font-size:12px;transform:scaleX(0.8398);line-height:14px;top:125.03px;left:273.50px;transform-origin:0 0;">- ig</span>
<span class="t" style="font-size:12px;transform:scaleX(1.0702);line-height:14px;top:125.03px;left:310.00px;transform-origin:0 0;">&gt;</span>
<span class="t" style="font-size:12px;transform:scaleX(0.8895);line-height:14px;top:125.03px;left:338.00px;transform-origin:0 0;">Vevői megrendelés teljesítés dátum</span>
<span class="t" style="font-size:12px;transform:scaleX(0.8683);line-height:14px;top:125.03px;left:1150.00px;transform-origin:0 0;">Nyomtatási paraméterek</span>
<span class="t" style="font-size:12px;transform:scaleX(0.9079);line-height:14px;top:157.03px;left:40.00px;transform-origin:0 0;">Paritás kód</span>
<span class="t" style="font-size:12px;transform:scaleX(0.8996);line-height:14px;top:157.03px;left:109.50px;transform-origin:0 0;">Paritás név</span>
<span class="t" style="font-size:12px;transform:scaleX(0.8875);line-height:14px;top:157.03px;left:178.00px;transform-origin:0 0;">Fizetési mód kód</span>
<span class="t" style="font-size:12px;transform:scaleX(0.8831);line-height:14px;top:157.03px;left:273.40px;transform-origin:0 0;">Fizetési mód név</span>
<span class="t" style="font-size:12px;transform:scaleX(0.9053);line-height:14px;top:157.03px;left:368.60px;transform-origin:0 0;">Illetékesség kód</span>
<span class="t" style="font-size:12px;transform:scaleX(0.9065);line-height:14px;top:157.03px;left:461.00px;transform-origin:0 0;">Illetékesség név</span>
<span class="t" style="font-size:12px;transform:scaleX(0.9371);line-height:14px;top:157.03px;left:620.50px;transform-origin:0 0;">Járat</span>
<span class="t" style="font-size:12px;transform:scaleX(0.9027);line-height:14px;top:157.03px;left:820.50px;transform-origin:0 0;">Partner kód</span>
<span class="t" style="font-size:12px;transform:scaleX(0.9011);line-height:14px;top:157.03px;left:891.60px;transform-origin:0 0;">Partner név</span>
<span class="t" style="font-size:12px;transform:scaleX(0.8730);line-height:14px;top:157.03px;left:1002.70px;transform-origin:0 0;">Megrendelés biz.szám</span>
<span class="t" style="font-size:12px;transform:scaleX(0.8870);line-height:14px;top:150.03px;left:1122.70px;transform-origin:0 0;">Megrendelés teljesítés</span>
<span class="t" style="font-size:12px;transform:scaleX(0.8995);line-height:14px;top:164.03px;left:1122.70px;transform-origin:0 0;">dátum</span>
<span class="t" style="font-size:12px;transform:scaleX(0.9503);line-height:14px;top:150.03px;width:8.42px;overflow:hidden;left:1244.00px;transform-origin:0 0;">M</span>
<span class="t" style="font-size:12px;transform:scaleX(0.9740);line-height:14px;top:164.03px;width:8.21px;overflow:hidden;left:1244.00px;transform-origin:0 0;">d</span>
<span class="t" style="font-size:12px;transform:scaleX(0.9500);font-weight:bold;line-height:14px;top:184.03px;left:11.80px;transform-origin:0 0;">1</span>
<span class="t" style="font-size:12px;transform:scaleX(0.8750);line-height:14px;top:181.03px;left:40.00px;transform-origin:0 0;">BFD</span>
<span class="t" style="font-size:12px;transform:scaleX(0.8858);line-height:14px;top:181.03px;left:109.00px;transform-origin:0 0;">Belföld</span>
<span class="t" style="font-size:12px;transform:scaleX(0.9693);line-height:14px;top:181.03px;left:177.00px;transform-origin:0 0;">AT</span>
<span class="t" style="font-size:12px;transform:scaleX(0.9225);line-height:14px;top:181.03px;left:272.00px;transform-origin:0 0;">Átutalás</span>
<span class="t" style="font-size:12px;transform:scaleX(0.9241);line-height:14px;top:181.03px;left:368.00px;transform-origin:0 0;">???</span>
<span class="t" style="font-size:12px;transform:scaleX(0.8838);line-height:14px;top:181.03px;left:460.50px;transform-origin:0 0;">Nem meghatározott illetékesség</span>
<span class="t" style="font-size:12px;transform:scaleX(0.9241);line-height:14px;top:181.03px;left:620.50px;transform-origin:0 0;">???</span>
<span class="t" style="font-size:12px;transform:scaleX(0.9553);line-height:14px;top:181.03px;left:819.50px;transform-origin:0 0;">1002</span>
<span class="t" style="font-size:12px;transform:scaleX(0.9123);line-height:14px;top:181.03px;left:890.00px;transform-origin:0 0;">Nagy Nándor</span>
<span class="t" style="font-size:12px;transform:scaleX(0.9267);line-height:14px;top:181.03px;left:1001.50px;transform-origin:0 0;">55-VMS/2008</span>
<span class="t" style="font-size:12px;transform:scaleX(0.8879);line-height:14px;top:181.03px;left:1121.50px;transform-origin:0 0;">2008-01-14</span>
<span class="t" style="left:1244px;top:181px;width:8px;overflow:hidden;font-size:12px;line-height:14px;transform:scaleX(.88);transform-origin:0 0">20</span>
<span class="t" style="font-size:12px;transform:scaleX(0.8800);line-height:14px;top:204.03px;left:11.80px;transform-origin:0 0;">2</span>
<span class="t" style="font-size:12px;transform:scaleX(0.8750);line-height:14px;top:201.03px;left:40.00px;transform-origin:0 0;">BFD</span>
<span class="t" style="font-size:12px;transform:scaleX(0.8858);line-height:14px;top:201.03px;left:109.00px;transform-origin:0 0;">Belföld</span>
<span class="t" style="font-size:12px;transform:scaleX(0.9693);line-height:14px;top:201.03px;left:177.00px;transform-origin:0 0;">AT</span>
<span class="t" style="font-size:12px;transform:scaleX(0.9225);line-height:14px;top:201.03px;left:272.00px;transform-origin:0 0;">Átutalás</span>
<span class="t" style="font-size:12px;transform:scaleX(0.9241);line-height:14px;top:201.03px;left:368.00px;transform-origin:0 0;">???</span>
<span class="t" style="font-size:12px;transform:scaleX(0.8838);line-height:14px;top:201.03px;left:460.50px;transform-origin:0 0;">Nem meghatározott illetékesség</span>
<span class="t" style="font-size:12px;transform:scaleX(0.9241);line-height:14px;top:201.03px;left:620.50px;transform-origin:0 0;">???</span>
<span class="t" style="font-size:12px;transform:scaleX(0.9553);line-height:14px;top:201.03px;left:819.50px;transform-origin:0 0;">1002</span>
<span class="t" style="font-size:12px;transform:scaleX(0.9123);line-height:14px;top:201.03px;left:890.00px;transform-origin:0 0;">Nagy Nándor</span>
<span class="t" style="font-size:12px;transform:scaleX(0.9267);line-height:14px;top:201.03px;left:1001.50px;transform-origin:0 0;">55-VMS/2008</span>
<span class="t" style="font-size:12px;transform:scaleX(0.8879);line-height:14px;top:201.03px;left:1121.50px;transform-origin:0 0;">2008-01-14</span>
<span class="t" style="left:1244px;top:201px;width:8px;overflow:hidden;font-size:12px;line-height:14px;transform:scaleX(.88);transform-origin:0 0">20</span>
<span class="t" style="font-size:12px;transform:scaleX(0.8800);line-height:14px;top:224.03px;left:11.80px;transform-origin:0 0;">3</span>
<span class="t" style="font-size:12px;transform:scaleX(0.8750);line-height:14px;top:221.03px;left:40.00px;transform-origin:0 0;">BFD</span>
<span class="t" style="font-size:12px;transform:scaleX(0.8858);line-height:14px;top:221.03px;left:109.00px;transform-origin:0 0;">Belföld</span>
<span class="t" style="font-size:12px;transform:scaleX(0.9693);line-height:14px;top:221.03px;left:177.00px;transform-origin:0 0;">AT</span>
<span class="t" style="font-size:12px;transform:scaleX(0.9225);line-height:14px;top:221.03px;left:272.00px;transform-origin:0 0;">Átutalás</span>
<span class="t" style="font-size:12px;transform:scaleX(0.9241);line-height:14px;top:221.03px;left:368.00px;transform-origin:0 0;">???</span>
<span class="t" style="font-size:12px;transform:scaleX(0.8838);line-height:14px;top:221.03px;left:460.50px;transform-origin:0 0;">Nem meghatározott illetékesség</span>
<span class="t" style="font-size:12px;transform:scaleX(0.9241);line-height:14px;top:221.03px;left:620.50px;transform-origin:0 0;">???</span>
<span class="t" style="font-size:12px;transform:scaleX(0.9553);line-height:14px;top:221.03px;left:819.50px;transform-origin:0 0;">1002</span>
<span class="t" style="font-size:12px;transform:scaleX(0.9123);line-height:14px;top:221.03px;left:890.00px;transform-origin:0 0;">Nagy Nándor</span>
<span class="t" style="font-size:12px;transform:scaleX(0.9267);line-height:14px;top:221.03px;left:1001.50px;transform-origin:0 0;">55-VMS/2008</span>
<span class="t" style="font-size:12px;transform:scaleX(0.8879);line-height:14px;top:221.03px;left:1121.50px;transform-origin:0 0;">2008-01-14</span>
<span class="t" style="left:1244px;top:221px;width:8px;overflow:hidden;font-size:12px;line-height:14px;transform:scaleX(.88);transform-origin:0 0">20</span>
<span class="t" style="font-size:12px;transform:scaleX(0.8800);line-height:14px;top:244.03px;left:11.80px;transform-origin:0 0;">4</span>
<span class="t" style="font-size:12px;transform:scaleX(0.8750);line-height:14px;top:241.03px;left:40.00px;transform-origin:0 0;">BFD</span>
<span class="t" style="font-size:12px;transform:scaleX(0.8858);line-height:14px;top:241.03px;left:109.00px;transform-origin:0 0;">Belföld</span>
<span class="t" style="font-size:12px;transform:scaleX(0.9693);line-height:14px;top:241.03px;left:177.00px;transform-origin:0 0;">AT</span>
<span class="t" style="font-size:12px;transform:scaleX(0.9225);line-height:14px;top:241.03px;left:272.00px;transform-origin:0 0;">Átutalás</span>
<span class="t" style="font-size:12px;transform:scaleX(0.9241);line-height:14px;top:241.03px;left:368.00px;transform-origin:0 0;">???</span>
<span class="t" style="font-size:12px;transform:scaleX(0.8838);line-height:14px;top:241.03px;left:460.50px;transform-origin:0 0;">Nem meghatározott illetékesség</span>
<span class="t" style="font-size:12px;transform:scaleX(0.9241);line-height:14px;top:241.03px;left:620.50px;transform-origin:0 0;">???</span>
<span class="t" style="font-size:12px;transform:scaleX(0.9553);line-height:14px;top:241.03px;left:819.50px;transform-origin:0 0;">1002</span>
<span class="t" style="font-size:12px;transform:scaleX(0.9123);line-height:14px;top:241.03px;left:890.00px;transform-origin:0 0;">Nagy Nándor</span>
<span class="t" style="font-size:12px;transform:scaleX(0.9267);line-height:14px;top:241.03px;left:1001.50px;transform-origin:0 0;">55-VMS/2008</span>
<span class="t" style="font-size:12px;transform:scaleX(0.8879);line-height:14px;top:241.03px;left:1121.50px;transform-origin:0 0;">2008-01-14</span>
<span class="t" style="left:1244px;top:241px;width:8px;overflow:hidden;font-size:12px;line-height:14px;transform:scaleX(.88);transform-origin:0 0">20</span>
<span class="t" style="font-size:12px;transform:scaleX(0.8800);line-height:14px;top:264.03px;left:11.80px;transform-origin:0 0;">5</span>
<span class="t" style="font-size:12px;transform:scaleX(0.8750);line-height:14px;top:261.03px;left:40.00px;transform-origin:0 0;">BFD</span>
<span class="t" style="font-size:12px;transform:scaleX(0.8858);line-height:14px;top:261.03px;left:109.00px;transform-origin:0 0;">Belföld</span>
<span class="t" style="font-size:12px;transform:scaleX(0.9693);line-height:14px;top:261.03px;left:177.00px;transform-origin:0 0;">AT</span>
<span class="t" style="font-size:12px;transform:scaleX(0.9225);line-height:14px;top:261.03px;left:272.00px;transform-origin:0 0;">Átutalás</span>
<span class="t" style="font-size:12px;transform:scaleX(0.9241);line-height:14px;top:261.03px;left:368.00px;transform-origin:0 0;">???</span>
<span class="t" style="font-size:12px;transform:scaleX(0.8838);line-height:14px;top:261.03px;left:460.50px;transform-origin:0 0;">Nem meghatározott illetékesség</span>
<span class="t" style="font-size:12px;transform:scaleX(0.9241);line-height:14px;top:261.03px;left:620.50px;transform-origin:0 0;">???</span>
<span class="t" style="font-size:12px;transform:scaleX(0.9553);line-height:14px;top:261.03px;left:819.50px;transform-origin:0 0;">1017</span>
<span class="t" style="font-size:12px;transform:scaleX(0.8910);line-height:14px;top:261.03px;left:890.00px;transform-origin:0 0;">Szabó Hús-Ker</span>
<span class="t" style="font-size:12px;transform:scaleX(0.9267);line-height:14px;top:261.03px;left:1001.50px;transform-origin:0 0;">23-VMS/2008</span>
<span class="t" style="font-size:12px;transform:scaleX(0.8879);line-height:14px;top:261.03px;left:1121.50px;transform-origin:0 0;">2008-01-07</span>
<span class="t" style="left:1244px;top:261px;width:8px;overflow:hidden;font-size:12px;line-height:14px;transform:scaleX(.88);transform-origin:0 0">20</span>
<span class="t" style="font-size:12px;transform:scaleX(0.8800);line-height:14px;top:284.03px;left:11.80px;transform-origin:0 0;">6</span>
<span class="t" style="font-size:12px;transform:scaleX(0.8750);line-height:14px;top:281.03px;left:40.00px;transform-origin:0 0;">BFD</span>
<span class="t" style="font-size:12px;transform:scaleX(0.8858);line-height:14px;top:281.03px;left:109.00px;transform-origin:0 0;">Belföld</span>
<span class="t" style="font-size:12px;transform:scaleX(0.9693);line-height:14px;top:281.03px;left:177.00px;transform-origin:0 0;">AT</span>
<span class="t" style="font-size:12px;transform:scaleX(0.9225);line-height:14px;top:281.03px;left:272.00px;transform-origin:0 0;">Átutalás</span>
<span class="t" style="font-size:12px;transform:scaleX(0.9241);line-height:14px;top:281.03px;left:368.00px;transform-origin:0 0;">???</span>
<span class="t" style="font-size:12px;transform:scaleX(0.8838);line-height:14px;top:281.03px;left:460.50px;transform-origin:0 0;">Nem meghatározott illetékesség</span>
<span class="t" style="font-size:12px;transform:scaleX(0.9241);line-height:14px;top:281.03px;left:620.50px;transform-origin:0 0;">???</span>
<span class="t" style="font-size:12px;transform:scaleX(0.9553);line-height:14px;top:281.03px;left:819.50px;transform-origin:0 0;">1017</span>
<span class="t" style="font-size:12px;transform:scaleX(0.8910);line-height:14px;top:281.03px;left:890.00px;transform-origin:0 0;">Szabó Hús-Ker</span>
<span class="t" style="font-size:12px;transform:scaleX(0.9267);line-height:14px;top:281.03px;left:1001.50px;transform-origin:0 0;">65-VMS/2008</span>
<span class="t" style="font-size:12px;transform:scaleX(0.8879);line-height:14px;top:281.03px;left:1121.50px;transform-origin:0 0;">2008-01-14</span>
<span class="t" style="left:1244px;top:281px;width:8px;overflow:hidden;font-size:12px;line-height:14px;transform:scaleX(.88);transform-origin:0 0">20</span>
<span class="t" style="font-size:12px;transform:scaleX(0.8800);line-height:14px;top:304.03px;left:11.80px;transform-origin:0 0;">7</span>
<span class="t" style="font-size:12px;transform:scaleX(0.8750);line-height:14px;top:301.03px;left:40.00px;transform-origin:0 0;">BFD</span>
<span class="t" style="font-size:12px;transform:scaleX(0.8858);line-height:14px;top:301.03px;left:109.00px;transform-origin:0 0;">Belföld</span>
<span class="t" style="font-size:12px;transform:scaleX(0.9693);line-height:14px;top:301.03px;left:177.00px;transform-origin:0 0;">AT</span>
<span class="t" style="font-size:12px;transform:scaleX(0.9225);line-height:14px;top:301.03px;left:272.00px;transform-origin:0 0;">Átutalás</span>
<span class="t" style="font-size:12px;transform:scaleX(0.9241);line-height:14px;top:301.03px;left:368.00px;transform-origin:0 0;">???</span>
<span class="t" style="font-size:12px;transform:scaleX(0.8838);line-height:14px;top:301.03px;left:460.50px;transform-origin:0 0;">Nem meghatározott illetékesség</span>
<span class="t" style="font-size:12px;transform:scaleX(0.9241);line-height:14px;top:301.03px;left:620.50px;transform-origin:0 0;">???</span>
<span class="t" style="font-size:12px;transform:scaleX(0.9553);line-height:14px;top:301.03px;left:819.50px;transform-origin:0 0;">1017</span>
<span class="t" style="font-size:12px;transform:scaleX(0.8910);line-height:14px;top:301.03px;left:890.00px;transform-origin:0 0;">Szabó Hús-Ker</span>
<span class="t" style="font-size:12px;transform:scaleX(0.9267);line-height:14px;top:301.03px;left:1001.50px;transform-origin:0 0;">65-VMS/2008</span>
<span class="t" style="font-size:12px;transform:scaleX(0.8879);line-height:14px;top:301.03px;left:1121.50px;transform-origin:0 0;">2008-01-14</span>
<span class="t" style="left:1244px;top:301px;width:8px;overflow:hidden;font-size:12px;line-height:14px;transform:scaleX(.88);transform-origin:0 0">20</span>
<span class="t" style="font-size:12px;transform:scaleX(0.8800);line-height:14px;top:324.03px;left:11.80px;transform-origin:0 0;">8</span>
<span class="t" style="font-size:12px;transform:scaleX(0.8750);line-height:14px;top:321.03px;left:40.00px;transform-origin:0 0;">BFD</span>
<span class="t" style="font-size:12px;transform:scaleX(0.8858);line-height:14px;top:321.03px;left:109.00px;transform-origin:0 0;">Belföld</span>
<span class="t" style="font-size:12px;transform:scaleX(0.9693);line-height:14px;top:321.03px;left:177.00px;transform-origin:0 0;">AT</span>
<span class="t" style="font-size:12px;transform:scaleX(0.9225);line-height:14px;top:321.03px;left:272.00px;transform-origin:0 0;">Átutalás</span>
<span class="t" style="font-size:12px;transform:scaleX(0.9241);line-height:14px;top:321.03px;left:368.00px;transform-origin:0 0;">???</span>
<span class="t" style="font-size:12px;transform:scaleX(0.8838);line-height:14px;top:321.03px;left:460.50px;transform-origin:0 0;">Nem meghatározott illetékesség</span>
<span class="t" style="font-size:12px;transform:scaleX(0.9241);line-height:14px;top:321.03px;left:620.50px;transform-origin:0 0;">???</span>
<span class="t" style="font-size:12px;transform:scaleX(0.9553);line-height:14px;top:321.03px;left:819.50px;transform-origin:0 0;">1020</span>
<span class="t" style="font-size:12px;transform:scaleX(0.8957);line-height:14px;top:321.03px;left:890.00px;transform-origin:0 0;">Juhász Mihály</span>
<span class="t" style="font-size:12px;transform:scaleX(0.9267);line-height:14px;top:321.03px;left:1001.50px;transform-origin:0 0;">39-VMS/2008</span>
<span class="t" style="font-size:12px;transform:scaleX(0.8879);line-height:14px;top:321.03px;left:1121.50px;transform-origin:0 0;">2008-01-08</span>
<span class="t" style="left:1244px;top:321px;width:8px;overflow:hidden;font-size:12px;line-height:14px;transform:scaleX(.88);transform-origin:0 0">20</span>
<span class="t" style="font-size:12px;transform:scaleX(0.8800);line-height:14px;top:344.03px;left:11.80px;transform-origin:0 0;">9</span>
<span class="t" style="font-size:12px;transform:scaleX(0.8750);line-height:14px;top:341.03px;left:40.00px;transform-origin:0 0;">BFD</span>
<span class="t" style="font-size:12px;transform:scaleX(0.8858);line-height:14px;top:341.03px;left:109.00px;transform-origin:0 0;">Belföld</span>
<span class="t" style="font-size:12px;transform:scaleX(0.9693);line-height:14px;top:341.03px;left:177.00px;transform-origin:0 0;">AT</span>
<span class="t" style="font-size:12px;transform:scaleX(0.9225);line-height:14px;top:341.03px;left:272.00px;transform-origin:0 0;">Átutalás</span>
<span class="t" style="font-size:12px;transform:scaleX(0.9241);line-height:14px;top:341.03px;left:368.00px;transform-origin:0 0;">???</span>
<span class="t" style="font-size:12px;transform:scaleX(0.8838);line-height:14px;top:341.03px;left:460.50px;transform-origin:0 0;">Nem meghatározott illetékesség</span>
<span class="t" style="font-size:12px;transform:scaleX(0.9241);line-height:14px;top:341.03px;left:620.50px;transform-origin:0 0;">???</span>
<span class="t" style="font-size:12px;transform:scaleX(0.9553);line-height:14px;top:341.03px;left:819.50px;transform-origin:0 0;">1020</span>
<span class="t" style="font-size:12px;transform:scaleX(0.8957);line-height:14px;top:341.03px;left:890.00px;transform-origin:0 0;">Juhász Mihály</span>
<span class="t" style="font-size:12px;transform:scaleX(0.9267);line-height:14px;top:341.03px;left:1001.50px;transform-origin:0 0;">39-VMS/2008</span>
<span class="t" style="font-size:12px;transform:scaleX(0.8879);line-height:14px;top:341.03px;left:1121.50px;transform-origin:0 0;">2008-01-08</span>
<span class="t" style="left:1244px;top:341px;width:8px;overflow:hidden;font-size:12px;line-height:14px;transform:scaleX(.88);transform-origin:0 0">20</span>
<span class="t" style="font-size:12px;transform:scaleX(0.8800);line-height:14px;top:364.03px;left:11.80px;transform-origin:0 0;">10</span>
<span class="t" style="font-size:12px;transform:scaleX(0.8750);line-height:14px;top:361.03px;left:40.00px;transform-origin:0 0;">BFD</span>
<span class="t" style="font-size:12px;transform:scaleX(0.8858);line-height:14px;top:361.03px;left:109.00px;transform-origin:0 0;">Belföld</span>
<span class="t" style="font-size:12px;transform:scaleX(0.9693);line-height:14px;top:361.03px;left:177.00px;transform-origin:0 0;">AT</span>
<span class="t" style="font-size:12px;transform:scaleX(0.9225);line-height:14px;top:361.03px;left:272.00px;transform-origin:0 0;">Átutalás</span>
<span class="t" style="font-size:12px;transform:scaleX(0.9241);line-height:14px;top:361.03px;left:368.00px;transform-origin:0 0;">???</span>
<span class="t" style="font-size:12px;transform:scaleX(0.8838);line-height:14px;top:361.03px;left:460.50px;transform-origin:0 0;">Nem meghatározott illetékesség</span>
<span class="t" style="font-size:12px;transform:scaleX(0.9001);line-height:14px;top:361.03px;left:620.50px;transform-origin:0 0;">1009_1009_CSABA KÁZMÉR</span>
<span class="t" style="font-size:12px;transform:scaleX(0.9553);line-height:14px;top:361.03px;left:819.50px;transform-origin:0 0;">1009</span>
<span class="t" style="font-size:12px;transform:scaleX(0.8845);line-height:14px;top:361.03px;left:890.00px;transform-origin:0 0;">Csaba Kázmér</span>
<span class="t" style="font-size:12px;transform:scaleX(0.9267);line-height:14px;top:361.03px;left:1001.50px;transform-origin:0 0;">15-VMS/2008</span>
<span class="t" style="font-size:12px;transform:scaleX(0.8879);line-height:14px;top:361.03px;left:1121.50px;transform-origin:0 0;">2008-01-08</span>
<span class="t" style="left:1244px;top:361px;width:8px;overflow:hidden;font-size:12px;line-height:14px;transform:scaleX(.88);transform-origin:0 0">20</span>
<span class="t" style="font-size:12px;transform:scaleX(0.8800);line-height:14px;top:384.03px;left:11.80px;transform-origin:0 0;">11</span>
<span class="t" style="font-size:12px;transform:scaleX(0.8750);line-height:14px;top:381.03px;left:40.00px;transform-origin:0 0;">BFD</span>
<span class="t" style="font-size:12px;transform:scaleX(0.8858);line-height:14px;top:381.03px;left:109.00px;transform-origin:0 0;">Belföld</span>
<span class="t" style="font-size:12px;transform:scaleX(0.9693);line-height:14px;top:381.03px;left:177.00px;transform-origin:0 0;">AT</span>
<span class="t" style="font-size:12px;transform:scaleX(0.9225);line-height:14px;top:381.03px;left:272.00px;transform-origin:0 0;">Átutalás</span>
<span class="t" style="font-size:12px;transform:scaleX(0.9241);line-height:14px;top:381.03px;left:368.00px;transform-origin:0 0;">???</span>
<span class="t" style="font-size:12px;transform:scaleX(0.8838);line-height:14px;top:381.03px;left:460.50px;transform-origin:0 0;">Nem meghatározott illetékesség</span>
<span class="t" style="font-size:12px;transform:scaleX(0.9001);line-height:14px;top:381.03px;left:620.50px;transform-origin:0 0;">1009_1009_CSABA KÁZMÉR</span>
<span class="t" style="font-size:12px;transform:scaleX(0.9553);line-height:14px;top:381.03px;left:819.50px;transform-origin:0 0;">1009</span>
<span class="t" style="font-size:12px;transform:scaleX(0.8845);line-height:14px;top:381.03px;left:890.00px;transform-origin:0 0;">Csaba Kázmér</span>
<span class="t" style="font-size:12px;transform:scaleX(0.9267);line-height:14px;top:381.03px;left:1001.50px;transform-origin:0 0;">40-VMS/2008</span>
<span class="t" style="font-size:12px;transform:scaleX(0.8879);line-height:14px;top:381.03px;left:1121.50px;transform-origin:0 0;">2008-01-08</span>
<span class="t" style="left:1244px;top:381px;width:8px;overflow:hidden;font-size:12px;line-height:14px;transform:scaleX(.88);transform-origin:0 0">20</span>
<span class="t" style="font-size:12px;transform:scaleX(0.8800);line-height:14px;top:404.03px;left:11.80px;transform-origin:0 0;">12</span>
<span class="t" style="font-size:12px;transform:scaleX(0.8750);line-height:14px;top:401.03px;left:40.00px;transform-origin:0 0;">BFD</span>
<span class="t" style="font-size:12px;transform:scaleX(0.8858);line-height:14px;top:401.03px;left:109.00px;transform-origin:0 0;">Belföld</span>
<span class="t" style="font-size:12px;transform:scaleX(0.9693);line-height:14px;top:401.03px;left:177.00px;transform-origin:0 0;">AT</span>
<span class="t" style="font-size:12px;transform:scaleX(0.9225);line-height:14px;top:401.03px;left:272.00px;transform-origin:0 0;">Átutalás</span>
<span class="t" style="font-size:12px;transform:scaleX(0.9241);line-height:14px;top:401.03px;left:368.00px;transform-origin:0 0;">???</span>
<span class="t" style="font-size:12px;transform:scaleX(0.8838);line-height:14px;top:401.03px;left:460.50px;transform-origin:0 0;">Nem meghatározott illetékesség</span>
<span class="t" style="font-size:12px;transform:scaleX(0.9001);line-height:14px;top:401.03px;left:620.50px;transform-origin:0 0;">1009_1009_CSABA KÁZMÉR</span>
<span class="t" style="font-size:12px;transform:scaleX(0.9553);line-height:14px;top:401.03px;left:819.50px;transform-origin:0 0;">1009</span>
<span class="t" style="font-size:12px;transform:scaleX(0.8845);line-height:14px;top:401.03px;left:890.00px;transform-origin:0 0;">Csaba Kázmér</span>
<span class="t" style="font-size:12px;transform:scaleX(0.9267);line-height:14px;top:401.03px;left:1001.50px;transform-origin:0 0;">40-VMS/2008</span>
<span class="t" style="font-size:12px;transform:scaleX(0.8879);line-height:14px;top:401.03px;left:1121.50px;transform-origin:0 0;">2008-01-08</span>
<span class="t" style="left:1244px;top:401px;width:8px;overflow:hidden;font-size:12px;line-height:14px;transform:scaleX(.88);transform-origin:0 0">20</span>
<span class="t" style="font-size:12px;transform:scaleX(0.8800);line-height:14px;top:424.03px;left:11.80px;transform-origin:0 0;">13</span>
<span class="t" style="font-size:12px;transform:scaleX(0.8750);line-height:14px;top:421.03px;left:40.00px;transform-origin:0 0;">BFD</span>
<span class="t" style="font-size:12px;transform:scaleX(0.8858);line-height:14px;top:421.03px;left:109.00px;transform-origin:0 0;">Belföld</span>
<span class="t" style="font-size:12px;transform:scaleX(0.9693);line-height:14px;top:421.03px;left:177.00px;transform-origin:0 0;">AT</span>
<span class="t" style="font-size:12px;transform:scaleX(0.9225);line-height:14px;top:421.03px;left:272.00px;transform-origin:0 0;">Átutalás</span>
<span class="t" style="font-size:12px;transform:scaleX(0.9241);line-height:14px;top:421.03px;left:368.00px;transform-origin:0 0;">???</span>
<span class="t" style="font-size:12px;transform:scaleX(0.8838);line-height:14px;top:421.03px;left:460.50px;transform-origin:0 0;">Nem meghatározott illetékesség</span>
<span class="t" style="font-size:12px;transform:scaleX(0.9001);line-height:14px;top:421.03px;left:620.50px;transform-origin:0 0;">1009_1009_CSABA KÁZMÉR</span>
<span class="t" style="font-size:12px;transform:scaleX(0.9553);line-height:14px;top:421.03px;left:819.50px;transform-origin:0 0;">1009</span>
<span class="t" style="font-size:12px;transform:scaleX(0.8845);line-height:14px;top:421.03px;left:890.00px;transform-origin:0 0;">Csaba Kázmér</span>
<span class="t" style="font-size:12px;transform:scaleX(0.9267);line-height:14px;top:421.03px;left:1001.50px;transform-origin:0 0;">44-VMS/2008</span>
<span class="t" style="font-size:12px;transform:scaleX(0.8879);line-height:14px;top:421.03px;left:1121.50px;transform-origin:0 0;">2008-01-08</span>
<span class="t" style="left:1244px;top:421px;width:8px;overflow:hidden;font-size:12px;line-height:14px;transform:scaleX(.88);transform-origin:0 0">20</span>
<span class="t" style="font-size:12px;transform:scaleX(0.8800);line-height:14px;top:444.03px;left:11.80px;transform-origin:0 0;">14</span>
<span class="t" style="font-size:12px;transform:scaleX(0.8750);line-height:14px;top:441.03px;left:40.00px;transform-origin:0 0;">BFD</span>
<span class="t" style="font-size:12px;transform:scaleX(0.8858);line-height:14px;top:441.03px;left:109.00px;transform-origin:0 0;">Belföld</span>
<span class="t" style="font-size:12px;transform:scaleX(0.9693);line-height:14px;top:441.03px;left:177.00px;transform-origin:0 0;">AT</span>
<span class="t" style="font-size:12px;transform:scaleX(0.9225);line-height:14px;top:441.03px;left:272.00px;transform-origin:0 0;">Átutalás</span>
<span class="t" style="font-size:12px;transform:scaleX(0.9241);line-height:14px;top:441.03px;left:368.00px;transform-origin:0 0;">???</span>
<span class="t" style="font-size:12px;transform:scaleX(0.8838);line-height:14px;top:441.03px;left:460.50px;transform-origin:0 0;">Nem meghatározott illetékesség</span>
<span class="t" style="font-size:12px;transform:scaleX(0.9001);line-height:14px;top:441.03px;left:620.50px;transform-origin:0 0;">1009_1009_CSABA KÁZMÉR</span>
<span class="t" style="font-size:12px;transform:scaleX(0.9553);line-height:14px;top:441.03px;left:819.50px;transform-origin:0 0;">1009</span>
<span class="t" style="font-size:12px;transform:scaleX(0.8845);line-height:14px;top:441.03px;left:890.00px;transform-origin:0 0;">Csaba Kázmér</span>
<span class="t" style="font-size:12px;transform:scaleX(0.9267);line-height:14px;top:441.03px;left:1001.50px;transform-origin:0 0;">44-VMS/2008</span>
<span class="t" style="font-size:12px;transform:scaleX(0.8879);line-height:14px;top:441.03px;left:1121.50px;transform-origin:0 0;">2008-01-08</span>
<span class="t" style="left:1244px;top:441px;width:8px;overflow:hidden;font-size:12px;line-height:14px;transform:scaleX(.88);transform-origin:0 0">20</span>
<span class="t" style="font-size:12px;transform:scaleX(0.8800);line-height:14px;top:464.03px;left:11.80px;transform-origin:0 0;">15</span>
<span class="t" style="font-size:12px;transform:scaleX(0.8750);line-height:14px;top:461.03px;left:40.00px;transform-origin:0 0;">BFD</span>
<span class="t" style="font-size:12px;transform:scaleX(0.8858);line-height:14px;top:461.03px;left:109.00px;transform-origin:0 0;">Belföld</span>
<span class="t" style="font-size:12px;transform:scaleX(0.9693);line-height:14px;top:461.03px;left:177.00px;transform-origin:0 0;">AT</span>
<span class="t" style="font-size:12px;transform:scaleX(0.9225);line-height:14px;top:461.03px;left:272.00px;transform-origin:0 0;">Átutalás</span>
<span class="t" style="font-size:12px;transform:scaleX(0.9241);line-height:14px;top:461.03px;left:368.00px;transform-origin:0 0;">???</span>
<span class="t" style="font-size:12px;transform:scaleX(0.8838);line-height:14px;top:461.03px;left:460.50px;transform-origin:0 0;">Nem meghatározott illetékesség</span>
<span class="t" style="font-size:12px;transform:scaleX(0.9001);line-height:14px;top:461.03px;left:620.50px;transform-origin:0 0;">1009_1009_CSABA KÁZMÉR</span>
<span class="t" style="font-size:12px;transform:scaleX(0.9553);line-height:14px;top:461.03px;left:819.50px;transform-origin:0 0;">1009</span>
<span class="t" style="font-size:12px;transform:scaleX(0.8845);line-height:14px;top:461.03px;left:890.00px;transform-origin:0 0;">Csaba Kázmér</span>
<span class="t" style="font-size:12px;transform:scaleX(0.9267);line-height:14px;top:461.03px;left:1001.50px;transform-origin:0 0;">44-VMS/2008</span>
<span class="t" style="font-size:12px;transform:scaleX(0.8879);line-height:14px;top:461.03px;left:1121.50px;transform-origin:0 0;">2008-01-08</span>
<span class="t" style="left:1244px;top:461px;width:8px;overflow:hidden;font-size:12px;line-height:14px;transform:scaleX(.88);transform-origin:0 0">20</span>
<span class="t" style="font-size:12px;transform:scaleX(0.8800);line-height:14px;top:484.03px;left:11.80px;transform-origin:0 0;">16</span>
<span class="t" style="font-size:12px;transform:scaleX(0.8750);line-height:14px;top:481.03px;left:40.00px;transform-origin:0 0;">BFD</span>
<span class="t" style="font-size:12px;transform:scaleX(0.8858);line-height:14px;top:481.03px;left:109.00px;transform-origin:0 0;">Belföld</span>
<span class="t" style="font-size:12px;transform:scaleX(0.9693);line-height:14px;top:481.03px;left:177.00px;transform-origin:0 0;">AT</span>
<span class="t" style="font-size:12px;transform:scaleX(0.9225);line-height:14px;top:481.03px;left:272.00px;transform-origin:0 0;">Átutalás</span>
<span class="t" style="font-size:12px;transform:scaleX(0.9241);line-height:14px;top:481.03px;left:368.00px;transform-origin:0 0;">???</span>
<span class="t" style="font-size:12px;transform:scaleX(0.8838);line-height:14px;top:481.03px;left:460.50px;transform-origin:0 0;">Nem meghatározott illetékesség</span>
<span class="t" style="font-size:12px;transform:scaleX(0.9001);line-height:14px;top:481.03px;left:620.50px;transform-origin:0 0;">1009_1009_CSABA KÁZMÉR</span>
<span class="t" style="font-size:12px;transform:scaleX(0.9553);line-height:14px;top:481.03px;left:819.50px;transform-origin:0 0;">1009</span>
<span class="t" style="font-size:12px;transform:scaleX(0.8845);line-height:14px;top:481.03px;left:890.00px;transform-origin:0 0;">Csaba Kázmér</span>
<span class="t" style="font-size:12px;transform:scaleX(0.9267);line-height:14px;top:481.03px;left:1001.50px;transform-origin:0 0;">47-VMS/2008</span>
<span class="t" style="font-size:12px;transform:scaleX(0.8879);line-height:14px;top:481.03px;left:1121.50px;transform-origin:0 0;">2008-01-08</span>
<span class="t" style="left:1244px;top:481px;width:8px;overflow:hidden;font-size:12px;line-height:14px;transform:scaleX(.88);transform-origin:0 0">20</span>
<span class="t" style="font-size:12px;transform:scaleX(0.8800);line-height:14px;top:504.03px;left:11.80px;transform-origin:0 0;">17</span>
<span class="t" style="font-size:12px;transform:scaleX(0.8750);line-height:14px;top:501.03px;left:40.00px;transform-origin:0 0;">BFD</span>
<span class="t" style="font-size:12px;transform:scaleX(0.8858);line-height:14px;top:501.03px;left:109.00px;transform-origin:0 0;">Belföld</span>
<span class="t" style="font-size:12px;transform:scaleX(0.9693);line-height:14px;top:501.03px;left:177.00px;transform-origin:0 0;">AT</span>
<span class="t" style="font-size:12px;transform:scaleX(0.9225);line-height:14px;top:501.03px;left:272.00px;transform-origin:0 0;">Átutalás</span>
<span class="t" style="font-size:12px;transform:scaleX(0.9241);line-height:14px;top:501.03px;left:368.00px;transform-origin:0 0;">???</span>
<span class="t" style="font-size:12px;transform:scaleX(0.8838);line-height:14px;top:501.03px;left:460.50px;transform-origin:0 0;">Nem meghatározott illetékesség</span>
<span class="t" style="font-size:12px;transform:scaleX(0.9001);line-height:14px;top:501.03px;left:620.50px;transform-origin:0 0;">1009_1009_CSABA KÁZMÉR</span>
<span class="t" style="font-size:12px;transform:scaleX(0.9553);line-height:14px;top:501.03px;left:819.50px;transform-origin:0 0;">1009</span>
<span class="t" style="font-size:12px;transform:scaleX(0.8845);line-height:14px;top:501.03px;left:890.00px;transform-origin:0 0;">Csaba Kázmér</span>
<span class="t" style="font-size:12px;transform:scaleX(0.9267);line-height:14px;top:501.03px;left:1001.50px;transform-origin:0 0;">47-VMS/2008</span>
<span class="t" style="font-size:12px;transform:scaleX(0.8879);line-height:14px;top:501.03px;left:1121.50px;transform-origin:0 0;">2008-01-08</span>
<span class="t" style="left:1244px;top:501px;width:8px;overflow:hidden;font-size:12px;line-height:14px;transform:scaleX(.88);transform-origin:0 0">20</span>
<span class="t" style="font-size:12px;transform:scaleX(0.8800);line-height:14px;top:524.03px;left:11.80px;transform-origin:0 0;">18</span>
<span class="t" style="font-size:12px;transform:scaleX(0.8750);line-height:14px;top:521.03px;left:40.00px;transform-origin:0 0;">BFD</span>
<span class="t" style="font-size:12px;transform:scaleX(0.8858);line-height:14px;top:521.03px;left:109.00px;transform-origin:0 0;">Belföld</span>
<span class="t" style="font-size:12px;transform:scaleX(0.9693);line-height:14px;top:521.03px;left:177.00px;transform-origin:0 0;">AT</span>
<span class="t" style="font-size:12px;transform:scaleX(0.9225);line-height:14px;top:521.03px;left:272.00px;transform-origin:0 0;">Átutalás</span>
<span class="t" style="font-size:12px;transform:scaleX(0.9241);line-height:14px;top:521.03px;left:368.00px;transform-origin:0 0;">???</span>
<span class="t" style="font-size:12px;transform:scaleX(0.8838);line-height:14px;top:521.03px;left:460.50px;transform-origin:0 0;">Nem meghatározott illetékesség</span>
<span class="t" style="font-size:12px;transform:scaleX(0.9001);line-height:14px;top:521.03px;left:620.50px;transform-origin:0 0;">1009_1009_CSABA KÁZMÉR</span>
<span class="t" style="font-size:12px;transform:scaleX(0.9553);line-height:14px;top:521.03px;left:819.50px;transform-origin:0 0;">1009</span>
<span class="t" style="font-size:12px;transform:scaleX(0.8845);line-height:14px;top:521.03px;left:890.00px;transform-origin:0 0;">Csaba Kázmér</span>
<span class="t" style="font-size:12px;transform:scaleX(0.9267);line-height:14px;top:521.03px;left:1001.50px;transform-origin:0 0;">47-VMS/2008</span>
<span class="t" style="font-size:12px;transform:scaleX(0.8879);line-height:14px;top:521.03px;left:1121.50px;transform-origin:0 0;">2008-01-08</span>
<span class="t" style="left:1244px;top:521px;width:8px;overflow:hidden;font-size:12px;line-height:14px;transform:scaleX(.88);transform-origin:0 0">20</span>
<span class="t" style="font-size:12px;transform:scaleX(0.8800);line-height:14px;top:544.03px;left:11.80px;transform-origin:0 0;">19</span>
<span class="t" style="font-size:12px;transform:scaleX(0.8750);line-height:14px;top:541.03px;left:40.00px;transform-origin:0 0;">BFD</span>
<span class="t" style="font-size:12px;transform:scaleX(0.8858);line-height:14px;top:541.03px;left:109.00px;transform-origin:0 0;">Belföld</span>
<span class="t" style="font-size:12px;transform:scaleX(0.9693);line-height:14px;top:541.03px;left:177.00px;transform-origin:0 0;">AT</span>
<span class="t" style="font-size:12px;transform:scaleX(0.9225);line-height:14px;top:541.03px;left:272.00px;transform-origin:0 0;">Átutalás</span>
<span class="t" style="font-size:12px;transform:scaleX(0.9241);line-height:14px;top:541.03px;left:368.00px;transform-origin:0 0;">???</span>
<span class="t" style="font-size:12px;transform:scaleX(0.8838);line-height:14px;top:541.03px;left:460.50px;transform-origin:0 0;">Nem meghatározott illetékesség</span>
<span class="t" style="font-size:12px;transform:scaleX(0.9001);line-height:14px;top:541.03px;left:620.50px;transform-origin:0 0;">1009_1009_CSABA KÁZMÉR</span>
<span class="t" style="font-size:12px;transform:scaleX(0.9553);line-height:14px;top:541.03px;left:819.50px;transform-origin:0 0;">1009</span>
<span class="t" style="font-size:12px;transform:scaleX(0.8845);line-height:14px;top:541.03px;left:890.00px;transform-origin:0 0;">Csaba Kázmér</span>
<span class="t" style="font-size:12px;transform:scaleX(0.9267);line-height:14px;top:541.03px;left:1001.50px;transform-origin:0 0;">47-VMS/2008</span>
<span class="t" style="font-size:12px;transform:scaleX(0.8879);line-height:14px;top:541.03px;left:1121.50px;transform-origin:0 0;">2008-01-08</span>
<span class="t" style="left:1244px;top:541px;width:8px;overflow:hidden;font-size:12px;line-height:14px;transform:scaleX(.88);transform-origin:0 0">20</span>
<span class="t" style="font-size:12px;transform:scaleX(0.8800);line-height:14px;top:564.03px;left:11.80px;transform-origin:0 0;">20</span>
<span class="t" style="font-size:12px;transform:scaleX(0.8750);line-height:14px;top:561.03px;left:40.00px;transform-origin:0 0;">BFD</span>
<span class="t" style="font-size:12px;transform:scaleX(0.8858);line-height:14px;top:561.03px;left:109.00px;transform-origin:0 0;">Belföld</span>
<span class="t" style="font-size:12px;transform:scaleX(0.9693);line-height:14px;top:561.03px;left:177.00px;transform-origin:0 0;">AT</span>
<span class="t" style="font-size:12px;transform:scaleX(0.9225);line-height:14px;top:561.03px;left:272.00px;transform-origin:0 0;">Átutalás</span>
<span class="t" style="font-size:12px;transform:scaleX(0.9241);line-height:14px;top:561.03px;left:368.00px;transform-origin:0 0;">???</span>
<span class="t" style="font-size:12px;transform:scaleX(0.8838);line-height:14px;top:561.03px;left:460.50px;transform-origin:0 0;">Nem meghatározott illetékesség</span>
<span class="t" style="font-size:12px;transform:scaleX(0.9001);line-height:14px;top:561.03px;left:620.50px;transform-origin:0 0;">1009_1009_CSABA KÁZMÉR</span>
<span class="t" style="font-size:12px;transform:scaleX(0.9553);line-height:14px;top:561.03px;left:819.50px;transform-origin:0 0;">1009</span>
<span class="t" style="font-size:12px;transform:scaleX(0.8845);line-height:14px;top:561.03px;left:890.00px;transform-origin:0 0;">Csaba Kázmér</span>
<span class="t" style="font-size:12px;transform:scaleX(0.9267);line-height:14px;top:561.03px;left:1001.50px;transform-origin:0 0;">73-VMS/2008</span>
<span class="t" style="font-size:12px;transform:scaleX(0.8879);line-height:14px;top:561.03px;left:1121.50px;transform-origin:0 0;">2008-01-15</span>
<span class="t" style="left:1244px;top:561px;width:8px;overflow:hidden;font-size:12px;line-height:14px;transform:scaleX(.88);transform-origin:0 0">20</span>
<span class="t" style="font-size:12px;transform:scaleX(0.8800);line-height:14px;top:584.03px;left:11.80px;transform-origin:0 0;">21</span>
<span class="t" style="font-size:12px;transform:scaleX(0.8750);line-height:14px;top:581.03px;left:40.00px;transform-origin:0 0;">BFD</span>
<span class="t" style="font-size:12px;transform:scaleX(0.8858);line-height:14px;top:581.03px;left:109.00px;transform-origin:0 0;">Belföld</span>
<span class="t" style="font-size:12px;transform:scaleX(0.9693);line-height:14px;top:581.03px;left:177.00px;transform-origin:0 0;">AT</span>
<span class="t" style="font-size:12px;transform:scaleX(0.9225);line-height:14px;top:581.03px;left:272.00px;transform-origin:0 0;">Átutalás</span>
<span class="t" style="font-size:12px;transform:scaleX(0.9241);line-height:14px;top:581.03px;left:368.00px;transform-origin:0 0;">???</span>
<span class="t" style="font-size:12px;transform:scaleX(0.8838);line-height:14px;top:581.03px;left:460.50px;transform-origin:0 0;">Nem meghatározott illetékesség</span>
<span class="t" style="font-size:12px;transform:scaleX(0.9001);line-height:14px;top:581.03px;left:620.50px;transform-origin:0 0;">1009_1009_CSABA KÁZMÉR</span>
<span class="t" style="font-size:12px;transform:scaleX(0.9553);line-height:14px;top:581.03px;left:819.50px;transform-origin:0 0;">1009</span>
<span class="t" style="font-size:12px;transform:scaleX(0.8845);line-height:14px;top:581.03px;left:890.00px;transform-origin:0 0;">Csaba Kázmér</span>
<span class="t" style="font-size:12px;transform:scaleX(0.9267);line-height:14px;top:581.03px;left:1001.50px;transform-origin:0 0;">73-VMS/2008</span>
<span class="t" style="font-size:12px;transform:scaleX(0.8879);line-height:14px;top:581.03px;left:1121.50px;transform-origin:0 0;">2008-01-15</span>
<span class="t" style="left:1244px;top:581px;width:8px;overflow:hidden;font-size:12px;line-height:14px;transform:scaleX(.88);transform-origin:0 0">20</span>
<span class="t" style="font-size:12px;transform:scaleX(0.8800);line-height:14px;top:604.03px;left:11.80px;transform-origin:0 0;">22</span>
<span class="t" style="font-size:12px;transform:scaleX(0.8750);line-height:14px;top:601.03px;left:40.00px;transform-origin:0 0;">BFD</span>
<span class="t" style="font-size:12px;transform:scaleX(0.8858);line-height:14px;top:601.03px;left:109.00px;transform-origin:0 0;">Belföld</span>
<span class="t" style="font-size:12px;transform:scaleX(0.9693);line-height:14px;top:601.03px;left:177.00px;transform-origin:0 0;">AT</span>
<span class="t" style="font-size:12px;transform:scaleX(0.9225);line-height:14px;top:601.03px;left:272.00px;transform-origin:0 0;">Átutalás</span>
<span class="t" style="font-size:12px;transform:scaleX(0.9241);line-height:14px;top:601.03px;left:368.00px;transform-origin:0 0;">???</span>
<span class="t" style="font-size:12px;transform:scaleX(0.8838);line-height:14px;top:601.03px;left:460.50px;transform-origin:0 0;">Nem meghatározott illetékesség</span>
<span class="t" style="font-size:12px;transform:scaleX(0.9001);line-height:14px;top:601.03px;left:620.50px;transform-origin:0 0;">1009_1009_CSABA KÁZMÉR</span>
<span class="t" style="font-size:12px;transform:scaleX(0.9553);line-height:14px;top:601.03px;left:819.50px;transform-origin:0 0;">1009</span>
<span class="t" style="font-size:12px;transform:scaleX(0.8845);line-height:14px;top:601.03px;left:890.00px;transform-origin:0 0;">Csaba Kázmér</span>
<span class="t" style="font-size:12px;transform:scaleX(0.9267);line-height:14px;top:601.03px;left:1001.50px;transform-origin:0 0;">73-VMS/2008</span>
<span class="t" style="font-size:12px;transform:scaleX(0.8879);line-height:14px;top:601.03px;left:1121.50px;transform-origin:0 0;">2008-01-15</span>
<span class="t" style="left:1244px;top:601px;width:8px;overflow:hidden;font-size:12px;line-height:14px;transform:scaleX(.88);transform-origin:0 0">20</span>
<span class="t" style="font-size:12px;transform:scaleX(0.8800);line-height:14px;top:624.03px;left:11.80px;transform-origin:0 0;">23</span>
<span class="t" style="font-size:12px;transform:scaleX(0.8750);line-height:14px;top:621.03px;left:40.00px;transform-origin:0 0;">BFD</span>
<span class="t" style="font-size:12px;transform:scaleX(0.8858);line-height:14px;top:621.03px;left:109.00px;transform-origin:0 0;">Belföld</span>
<span class="t" style="font-size:12px;transform:scaleX(0.9693);line-height:14px;top:621.03px;left:177.00px;transform-origin:0 0;">AT</span>
<span class="t" style="font-size:12px;transform:scaleX(0.9225);line-height:14px;top:621.03px;left:272.00px;transform-origin:0 0;">Átutalás</span>
<span class="t" style="font-size:12px;transform:scaleX(0.9241);line-height:14px;top:621.03px;left:368.00px;transform-origin:0 0;">???</span>
<span class="t" style="font-size:12px;transform:scaleX(0.8838);line-height:14px;top:621.03px;left:460.50px;transform-origin:0 0;">Nem meghatározott illetékesség</span>
<span class="t" style="font-size:12px;transform:scaleX(0.9001);line-height:14px;top:621.03px;left:620.50px;transform-origin:0 0;">1009_1009_CSABA KÁZMÉR</span>
<span class="t" style="font-size:12px;transform:scaleX(0.9553);line-height:14px;top:621.03px;left:819.50px;transform-origin:0 0;">1009</span>
<span class="t" style="font-size:12px;transform:scaleX(0.8845);line-height:14px;top:621.03px;left:890.00px;transform-origin:0 0;">Csaba Kázmér</span>
<span class="t" style="font-size:12px;transform:scaleX(0.9267);line-height:14px;top:621.03px;left:1001.50px;transform-origin:0 0;">75-VMS/2008</span>
<span class="t" style="font-size:12px;transform:scaleX(0.8879);line-height:14px;top:621.03px;left:1121.50px;transform-origin:0 0;">2008-01-15</span>
<span class="t" style="left:1244px;top:621px;width:8px;overflow:hidden;font-size:12px;line-height:14px;transform:scaleX(.88);transform-origin:0 0">20</span>
<span class="t" style="font-size:12px;transform:scaleX(0.8765);line-height:14px;top:664.03px;left:13.50px;transform-origin:0 0;">Összesített mennyiségek</span>
<span class="t" style="font-size:12px;transform:scaleX(0.8959);line-height:14px;top:664.03px;left:646.00px;transform-origin:0 0;">Összesített értékek pénznemenként</span>
<span class="t" style="font-size:12px;transform:scaleX(0.8709);line-height:14px;top:683.03px;left:80.50px;transform-origin:0 0;">Össz. darab (gyűjtő):</span>
<span class="t" style="font-size:12px;transform:scaleX(0.8651);line-height:14px;top:683.03px;left:262.00px;transform-origin:0 0;">Össz. mennyiség:</span>
<span class="t" style="font-size:12px;transform:scaleX(0.8305);line-height:14px;top:683.03px;left:444.00px;transform-origin:0 0;">Össz. súly :</span>
<span class="t" style="font-size:12px;transform:scaleX(0.8645);line-height:14px;top:700.03px;left:17.00px;transform-origin:0 0;">Össz. rendelt:</span>
<span class="t" style="font-size:12px;transform:scaleX(0.9553);line-height:14px;top:700.03px;right:1021.00px;transform-origin:100% 0;">1283</span>
<span class="t" style="font-size:12px;transform:scaleX(0.9553);line-height:14px;top:700.03px;right:839.00px;transform-origin:100% 0;">9271</span>
<span class="t" style="font-size:12px;transform:scaleX(0.9553);line-height:14px;top:700.03px;right:657.00px;transform-origin:100% 0;">9271</span>
<span class="t" style="font-size:12px;transform:scaleX(0.8804);line-height:14px;top:720.03px;left:17.00px;transform-origin:0 0;">Össz. kiadott:</span>
<span class="t" style="font-size:12px;transform:scaleX(0.9740);line-height:14px;top:720.03px;right:1021.00px;transform-origin:100% 0;">649</span>
<span class="t" style="font-size:12px;transform:scaleX(0.9553);line-height:14px;top:720.03px;right:839.00px;transform-origin:100% 0;">2819</span>
<span class="t" style="font-size:12px;transform:scaleX(0.9553);line-height:14px;top:720.03px;right:657.00px;transform-origin:100% 0;">2819</span>
<span class="t" style="font-size:12px;transform:scaleX(0.8847);line-height:14px;top:740.03px;left:17.00px;transform-origin:0 0;">Össz. átvett:</span>
<span class="t" style="font-size:12px;transform:scaleX(0.9740);line-height:14px;top:740.03px;right:1021.00px;transform-origin:100% 0;">957</span>
<span class="t" style="font-size:12px;transform:scaleX(0.9883);line-height:14px;top:740.03px;right:839.00px;transform-origin:100% 0;">8611</span>
<span class="t" style="font-size:12px;transform:scaleX(0.9883);line-height:14px;top:740.03px;right:657.00px;transform-origin:100% 0;">8611</span>
<span class="t" style="font-size:12px;transform:scaleX(0.8748);line-height:14px;top:683.03px;right:329.00px;transform-origin:100% 0;">Összes</span>
<span class="t" style="font-size:12px;transform:scaleX(0.9259);line-height:14px;top:697.03px;right:326.00px;transform-origin:100% 0;">nettó érték</span>
<span class="t" style="font-size:12px;transform:scaleX(0.8748);line-height:14px;top:683.03px;right:176.00px;transform-origin:100% 0;">Összes</span>
<span class="t" style="font-size:12px;transform:scaleX(0.9094);line-height:14px;top:697.03px;right:173.00px;transform-origin:100% 0;">adó érték</span>
<span class="t" style="font-size:12px;transform:scaleX(0.8748);line-height:14px;top:683.03px;right:24.00px;transform-origin:100% 0;">Összes</span>
<span class="t" style="font-size:12px;transform:scaleX(0.9061);line-height:14px;top:697.03px;right:21.00px;transform-origin:100% 0;">bruttó érték</span>
<span class="t tt" style="font-size:12px;transform:scaleX(0.8538);line-height:14px;top:775.03px;left:5.50px;transform-origin:0 0;">-v1.94H</span>
<span class="t tt" style="font-size:12px;transform:scaleX(0.7700);line-height:14px;top:775.03px;left:52.00px;transform-origin:0 0;">1 / 171</span>
</div>
</body></html>
